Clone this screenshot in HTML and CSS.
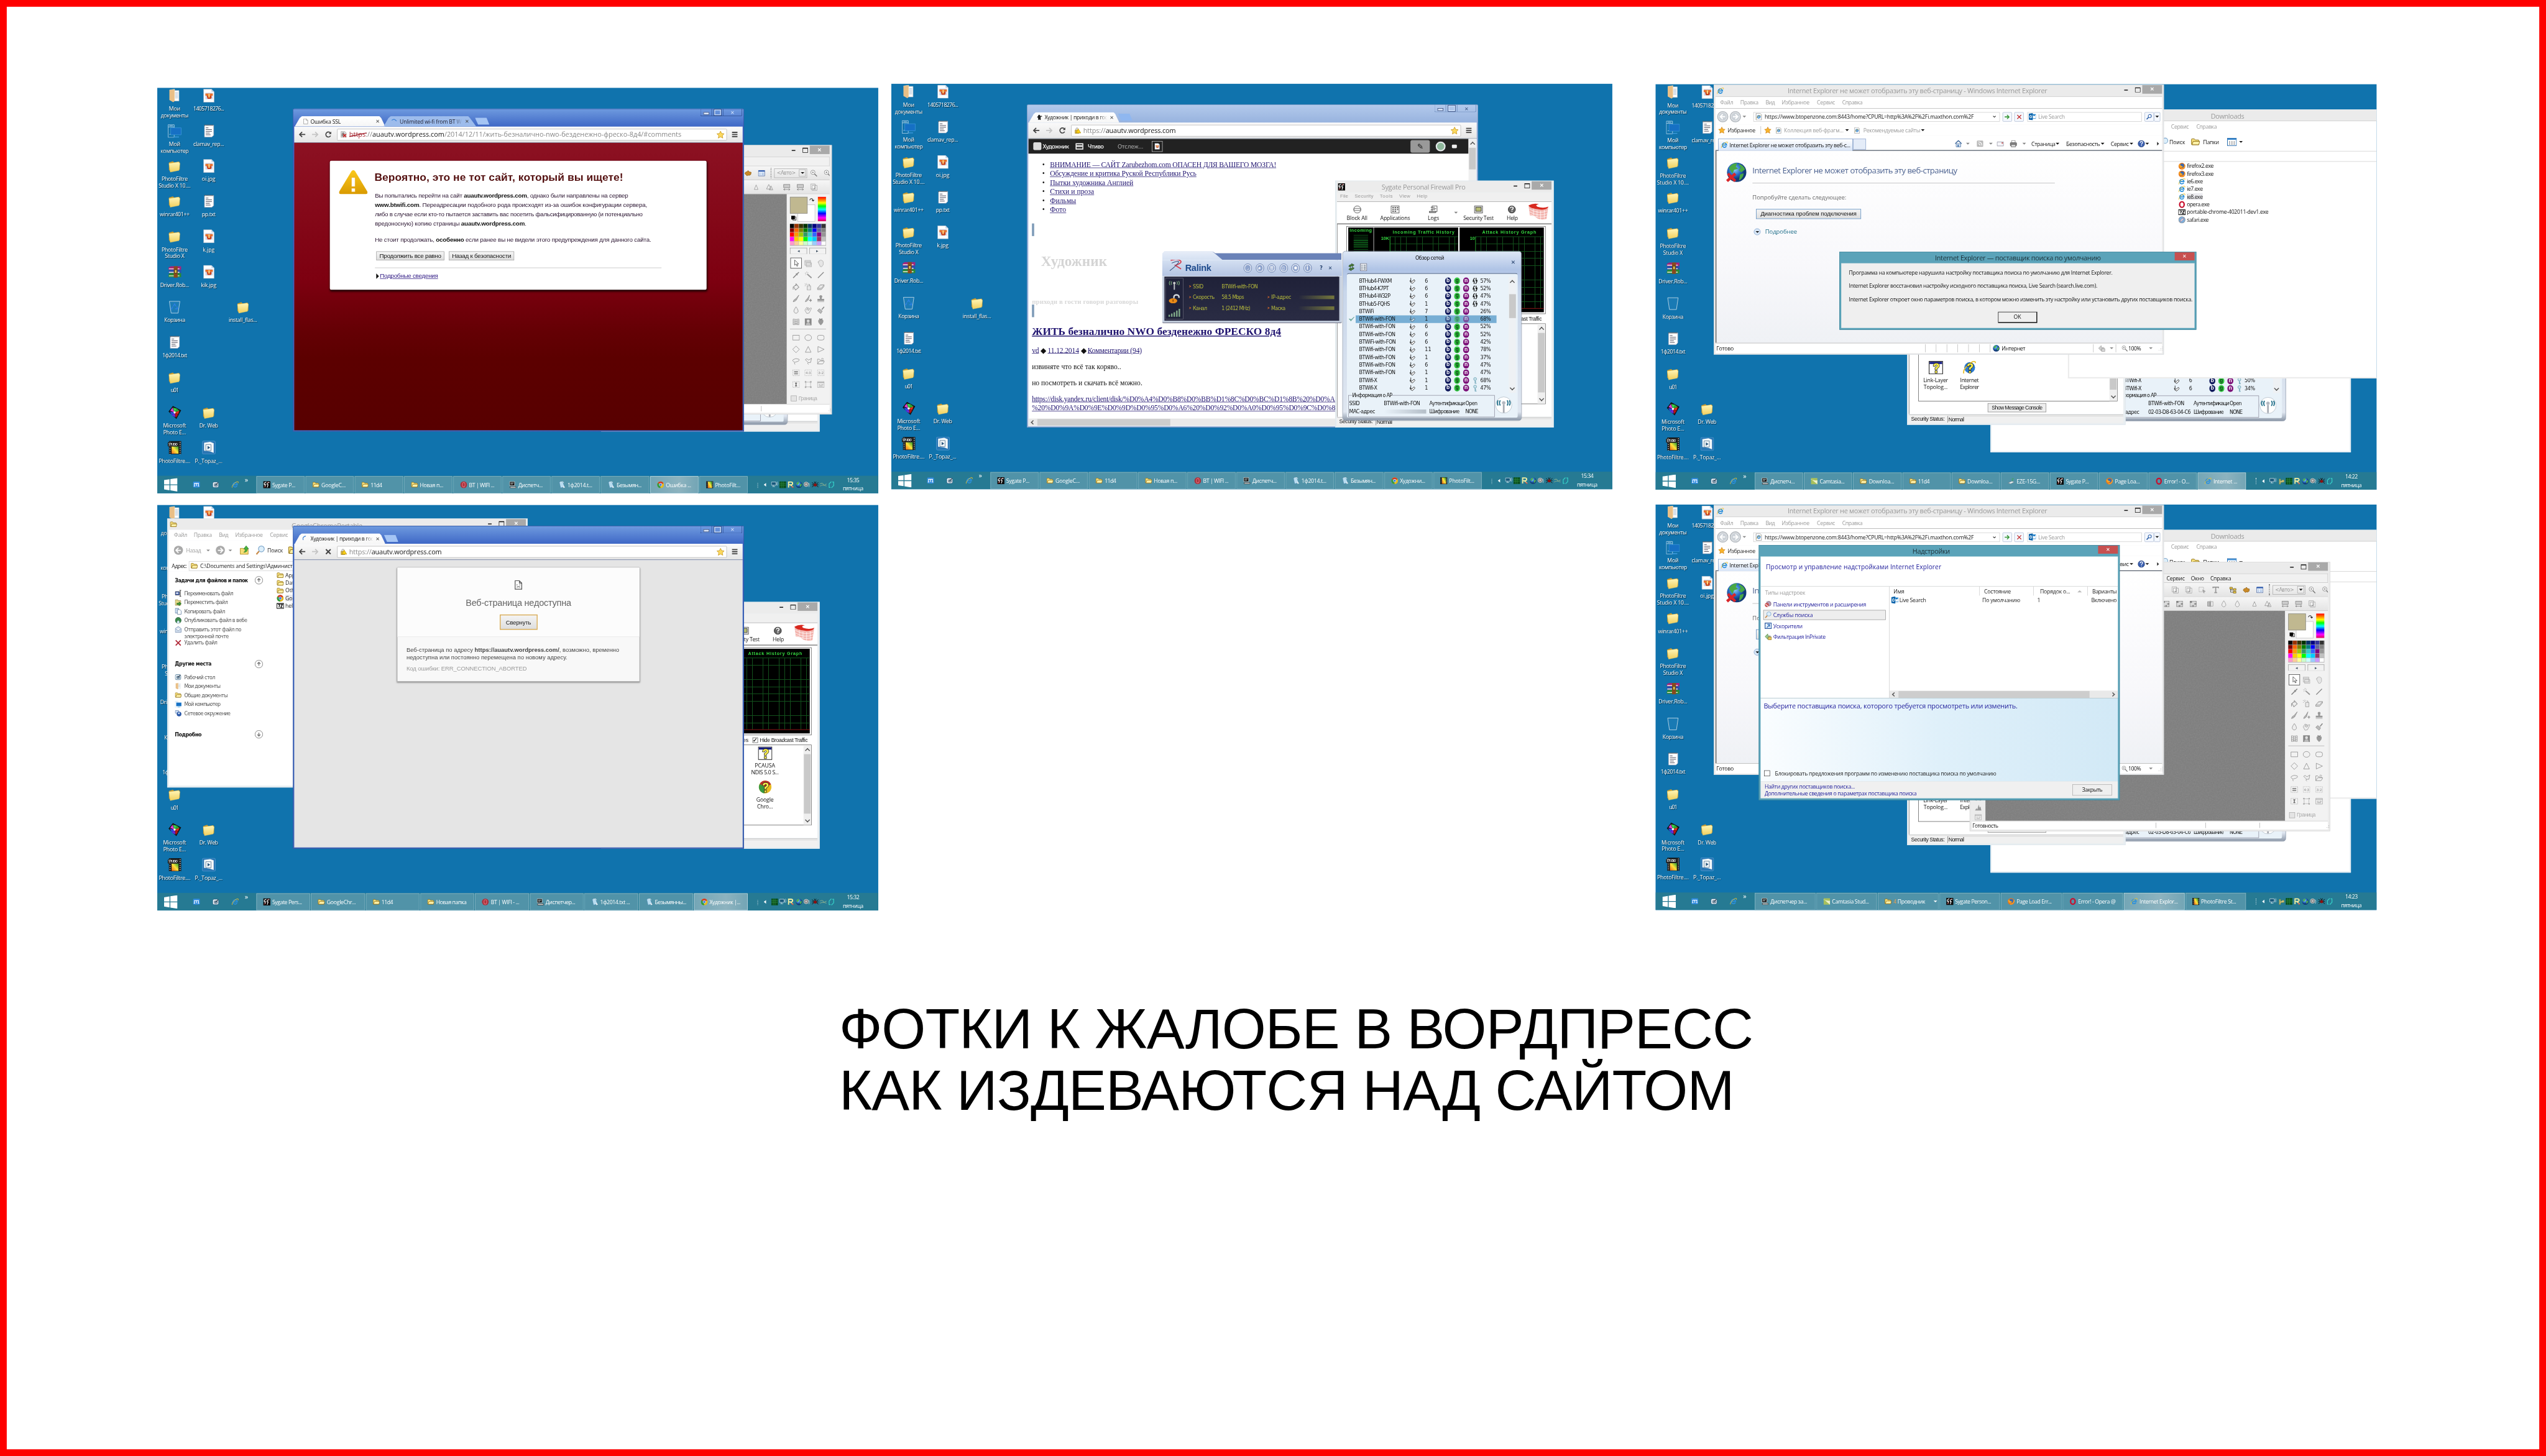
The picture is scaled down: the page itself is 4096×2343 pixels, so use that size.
FILE: index.html
```
<!DOCTYPE html>
<html lang="ru">
<head>
    <meta charset="UTF-8">
    <title>Фотки к жалобе</title>
    <link rel="stylesheet" href="styles.css">
</head>
<body>

<!-- icon sprite -->
<svg class="sprite" width="0" height="0">
    <defs>
        <linearGradient id="g-folder" x1="0" y1="0" x2="0" y2="1"><stop offset="0" stop-color="#fff6b8"/><stop offset="1" stop-color="#f0cf5c"/></linearGradient>
        <linearGradient id="g-warn" x1="0" y1="0" x2="0" y2="1"><stop offset="0" stop-color="#fbc91c"/><stop offset="1" stop-color="#d99a00"/></linearGradient>
        <linearGradient id="g-topaz" x1="0" y1="1" x2="1" y2="0"><stop offset="0" stop-color="#e8641b"/><stop offset=".5" stop-color="#ffe23a"/><stop offset="1" stop-color="#1c9c2c"/></linearGradient>
        <radialGradient id="g-globe" cx=".4" cy=".35"><stop offset="0" stop-color="#8fd0f5"/><stop offset=".6" stop-color="#2a6fc8"/><stop offset="1" stop-color="#123a78"/></radialGradient>
        <filter id="grain"><feTurbulence type="fractalNoise" baseFrequency=".35" numOctaves="2"/><feColorMatrix values="0 0 0 0 .5  0 0 0 0 .5  0 0 0 0 .5  .9 0 0 0 -.25"/></filter>
    </defs>
    <symbol id="docs" viewBox="0 0 32 32"><path d="M14 4h12v24H14z" fill="#fff" stroke="#b8c4cc"/><path d="M17 9h7M17 12h7M17 15h7M17 18h7M17 21h7" stroke="#8aa7c4"/><path d="M4 3l12-2v27l-3 3-9-5z" fill="#e9bf86"/><path d="M4 3l12-2v27" fill="none" stroke="#f5dcb4"/></symbol>
    <symbol id="pc" viewBox="0 0 32 32"><path d="M1 2h14v29H1zM1 7h14M4 4.500h8M4 24h6" fill="none" stroke="#b8d6ea" stroke-width="1.200"/><path d="M7 9h24v16H7z" fill="#1670c4" stroke="#3f9de0"/><path d="M14 30h12" stroke="#3f9de0" stroke-width="2"/></symbol>
    <symbol id="folder" viewBox="0 0 32 32"><path d="M3 8l9-3 3 3 11-2 2 2v16l-22 4-3-3z" fill="#c99a2c"/><path d="M3 10l22-3 3 3-2 16-20 4z" fill="url(#g-folder)" stroke="#e8cb62" stroke-width=".6"/></symbol>
    <symbol id="xpfolder" viewBox="0 0 16 16"><path d="M1 3.500q0-1 1-1h4l1.500 2H13q1 0 1 1V13H2q-1 0-1-1z" fill="#f7e07c" stroke="#8a6a12"/><path d="M2 13l2-6h11.500l-1.500 6z" fill="#fff2a8" stroke="#8a6a12"/></symbol>
    <symbol id="img" viewBox="0 0 32 32"><path d="M4 1h18l6 6v24H4z" fill="#fff" stroke="#9fb2c6"/><path d="M22 1v6h6z" fill="#bcd0e8"/><path d="M8 9h17v15H8z" fill="#cfd6ea"/><path d="M8 11h17v5H8z" fill="#e8702a"/><path d="M11 16h11v5l-2 2h-7z" fill="#c9421c"/><path d="M15 12h3v8h-3z" fill="#ffdc80"/></symbol>
    <symbol id="txt" viewBox="0 0 32 32"><path d="M6 3h21v23l-4 4H6z" fill="#fff" stroke="#aab"/><path d="M6 3h21" stroke="#555" stroke-width="3" stroke-dasharray="1.500 1.500"/><path d="M9 9h6M9 13h14M9 17h14M9 21h9M9 25h11" stroke="#445" stroke-width="1.300"/></symbol>
    <symbol id="rar" viewBox="0 0 32 32"><path d="M2 6l5-3h24v8H2z" fill="#a3267c"/><path d="M2 14l3-3h26v8H2z" fill="#2c4fae"/><path d="M2 22l3-3h26v9H2z" fill="#2a8a35"/><path d="M3 9h24M3 17h24M3 25h24" stroke="#efe8dc" stroke-width="2"/><path d="M14 3h9v26h-9z" fill="#8a4a1c"/><path d="M16 11h5v8h-5z" fill="#e8c84a" stroke="#222"/></symbol>
    <symbol id="bin" viewBox="0 0 32 32"><path d="M4 3h24l-4 27H8z" fill="#2c86c4" fill-opacity=".35" stroke="#c6dcea" stroke-width="1.200"/></symbol>
    <symbol id="binfull" viewBox="0 0 32 32"><path d="M4 3h24l-4 27H8z" fill="#2c86c4" fill-opacity=".4" stroke="#c6dcea" stroke-width="1.200"/><path d="M13 14l3-5 3 5M21 15l2 5h-6M11 20l-2 0 3-5" fill="none" stroke="#2a7fe0" stroke-width="2.400"/></symbol>
    <symbol id="mspe" viewBox="0 0 32 32"><path d="M2 14L12 1l19 10-11 20z" fill="#111"/><path d="M16 16L6 12l5-7z" fill="#e33ad0"/><path d="M16 16L12 5l9 2z" fill="#3bd24a"/><path d="M16 16l5-9 6 5z" fill="#2aa832"/><path d="M16 16l11-4-3 8z" fill="#e0301e"/><path d="M16 16l8 5-5 7z" fill="#b81313"/><path d="M16 16l2 11-8-4z" fill="#6a2ad8"/><path d="M16 16l-6 7-5-9z" fill="#2b48e0"/><circle cx="16" cy="16" r="2.500" fill="#fff"/></symbol>
    <symbol id="studio" viewBox="0 0 32 32"><path d="M3 1h28v30H3z" fill="#111"/><path d="M9 13h16v17H9z" fill="url(#g-topaz)"/><path d="M5.500 3v28M28.500 3v28" stroke="#ddd" stroke-width="2" stroke-dasharray="2 2.500"/><path d="M0 4h25v9H0z" fill="#000" stroke="#888" stroke-width=".6"/><text x="2" y="11" font-size="6.500" font-weight="bold" font-family="Liberation Sans, sans-serif" fill="#fff" textLength="21">STUDIO</text></symbol>
    <symbol id="ptopaz" viewBox="0 0 32 32"><rect x="1" y="1" width="30" height="30" rx="3" fill="#2a76b4" stroke="#5aa0d4"/><path d="M5 5l14-2 8 3v22l-8-3-14-2z" fill="#f4f8fa"/><path d="M9 9h12v14H9z" fill="none" stroke="#3a5f80"/><path d="M13 12l6 4-6 4z" fill="#2c5880"/></symbol>
    <symbol id="winlogo" viewBox="0 0 32 32"><path d="M0 5l13-2v12H0zM15 2.700L32 0v15H15zM0 17h13v12L0 27zM15 17h17v15l-17-2.700z" fill="#fff"/></symbol>
    <symbol id="maxthon" viewBox="0 0 16 16"><rect x=".5" y="1" width="15" height="13" rx="2" fill="#2f8be0"/><path d="M3.500 11V5h9v6M8 5v6M5 11h-3M14 11h-3" fill="none" stroke="#fff" stroke-width="1.500"/></symbol>
    <symbol id="desk" viewBox="0 0 16 16"><rect x="1" y="2" width="13" height="12" rx="3" fill="#e8f2f8" stroke="#27557a"/><path d="M5 6h6v5H5z" fill="#9fc2dc" stroke="#234"/><path d="M7 9l6-6" stroke="#234" stroke-width="1.500"/></symbol>
    <symbol id="ie" viewBox="0 0 16 16"><path d="M12 10.500A4.800 4.800 0 1 1 12.600 8H4" fill="none" stroke="#2b8fdc" stroke-width="2.400"/><path d="M1 14.500C-.5 11 8 1.500 13.500 1c2 0 1.500 2 .5 3.500" fill="none" stroke="#f0c42c" stroke-width="1.300"/></symbol>
    <symbol id="iedoc" viewBox="0 0 16 16"><path d="M2 .5h9l3 3v12H2z" fill="#fff" stroke="#888"/><path d="M11 9.500A3.200 3.200 0 1 1 11.300 8H5" fill="none" stroke="#2b7fcc" stroke-width="1.700"/><path d="M3 12c1-4 5-7 9-7" fill="none" stroke="#d8a820"/></symbol>
    <symbol id="sygate" viewBox="0 0 16 16"><path d="M0 0h16v16H0z" fill="#0a0a0a"/><path d="M7 2C3 3 1 6 3 8l2-1-1 6M14 3c-4 0-6 2-5 5l2 0-2 6" fill="none" stroke="#fff" stroke-width="1.500"/><path d="M2 14l4-4M9 4l3-3" stroke="#e02020"/></symbol>
    <symbol id="opera" viewBox="0 0 16 16"><ellipse cx="8" cy="8" rx="5" ry="6.200" fill="none" stroke="#c8102e" stroke-width="3.200"/></symbol>
    <symbol id="operam" viewBox="0 0 16 16"><circle cx="8" cy="8" r="7.500" fill="#a8323e"/><ellipse cx="8" cy="8" rx="3" ry="5" fill="none" stroke="#dc6c74" stroke-width="1.600"/></symbol>
    <symbol id="taskmgr" viewBox="0 0 16 16"><path d="M1 1h11v9H1z" fill="#111" stroke="#ddd"/><path d="M3 4h7M3 6.500h5" stroke="#fff"/><path d="M2 12h13v3H2z" fill="#e8e8e8" stroke="#222"/></symbol>
    <symbol id="notepad" viewBox="0 0 16 16"><path d="M2 2l8-1 4 12-9 2z" fill="#b8dcf0" stroke="#4888ac"/><path d="M4 2l6-1 2 3" fill="none" stroke="#fff"/><path d="M11 9l4 5-4 1z" fill="#e8eef2"/></symbol>
    <symbol id="chrome" viewBox="0 0 16 16"><circle cx="8" cy="8" r="7.500" fill="#e3b81c"/><path d="M8 8L1.500 4.200A7.500 7.500 0 0 1 14.500 4.500z" fill="#d23a2a"/><path d="M8 8L1.500 4.200A7.500 7.500 0 0 0 7.500 15.500z" fill="#2f9a42"/><circle cx="8" cy="8" r="3.400" fill="#fff"/><circle cx="8" cy="8" r="2.600" fill="#3c7de0"/></symbol>
    <symbol id="pf" viewBox="0 0 16 16"><path d="M0 0h16v16H0z" fill="#151515"/><path d="M4 1h9v14H4z" fill="url(#g-topaz)"/><path d="M2 1v14M14.500 1v14" stroke="#ccc" stroke-dasharray="1 1"/></symbol>
    <symbol id="firefox" viewBox="0 0 16 16"><circle cx="8" cy="8" r="7.500" fill="#e8761a"/><circle cx="8.500" cy="6.500" r="4.300" fill="#3468b4"/><path d="M1 5c2-1 4 0 5 2l4 1c-1 3-5 4-7 2z" fill="#f5a623"/><path d="M15 5c0 6-4 9-9 9" fill="none" stroke="#fbc84a" stroke-width="1.200"/></symbol>
    <symbol id="camtasia" viewBox="0 0 16 16"><path d="M1 1h14v14H1z" fill="#a8c05c"/><path d="M1 5c5-1 8 3 14 1v9L1 3z" fill="#eef2cc"/></symbol>
    <symbol id="eze" viewBox="0 0 16 16"><path d="M1 12l9-4 5 2-8 4z" fill="#e8eef2" stroke="#68808c"/><path d="M11 8V3M9 4l2-2 3 1" stroke="#38b048" fill="none"/></symbol>
    <symbol id="safari" viewBox="0 0 16 16"><circle cx="8" cy="8" r="7" fill="#7fb0dc" stroke="#8a98a8" stroke-width="1.500"/><path d="M12 4L7 7l-3 5 5-3z" fill="#fff" stroke="#c33" stroke-width=".5"/></symbol>
    <symbol id="sevenz" viewBox="0 0 16 16"><path d="M.5 2.500h15v11H.5z" fill="#fff" stroke="#000" stroke-width="1.500"/><path d="M3 5h4l-2 6M9 5h4l-4 6h4" fill="none" stroke="#000" stroke-width="1.600"/></symbol>
    <symbol id="page" viewBox="0 0 16 16"><path d="M3 1h7l4 4v10H3z" fill="#fff" stroke="#777"/><path d="M10 1v4h4" fill="none" stroke="#777"/></symbol>
    <symbol id="spin" viewBox="0 0 16 16"><path d="M2 12A7 7 0 0 1 9 1.500" fill="none" stroke="#3a7fd5" stroke-width="2"/></symbol>
    <symbol id="spintop" viewBox="0 0 16 16"><path d="M1 5Q8-1 14 7" fill="none" stroke="#3a7fd5" stroke-width="2"/></symbol>
    <symbol id="raven" viewBox="0 0 16 16"><path d="M5 1h4v3h5l1 2h-4v9H8l-1-3-1 3H4V9L1 8l3-4z" fill="#1a1a1a"/></symbol>
    <symbol id="lockbad" viewBox="0 0 16 16"><path d="M2 1h9l3 3v11H2z" fill="#ddd" stroke="#999"/><path d="M5 7V5q2-3 4 0v2M4 7h6v5H4z" fill="#999" stroke="#777"/><path d="M7 7l7 7M14 7l-7 7" stroke="#d02020" stroke-width="2.200"/></symbol>
    <symbol id="lockwarn" viewBox="0 0 16 16"><path d="M2 7h9v8H2z" fill="#d6b64a" stroke="#a08020"/><path d="M4 7V4q2.500-4 5 0v3" fill="none" stroke="#999" stroke-width="1.500"/><path d="M9 4l6.500 10h-11z" fill="#fcd116" stroke="#b08a00"/></symbol>
    <symbol id="back" viewBox="0 0 16 16"><path d="M8 2L2 8l6 6M2 8h14" fill="none" stroke="currentColor" stroke-width="2.600"/></symbol>
    <symbol id="fwd" viewBox="0 0 16 16"><path d="M8 2l6 6-6 6M14 8H0" fill="none" stroke="currentColor" stroke-width="2.600"/></symbol>
    <symbol id="reload" viewBox="0 0 16 16"><path d="M13 4.500A6 6 0 1 0 13.500 11" fill="none" stroke="#444" stroke-width="2.400"/><path d="M15 1v6H9z" fill="#444"/></symbol>
    <symbol id="stopx" viewBox="0 0 16 16"><path d="M2.500 2.500l11 11M13.500 2.500l-11 11" stroke="#444" stroke-width="3"/></symbol>
    <symbol id="star" viewBox="0 0 16 16"><path d="M8 1l2.200 4.600 5 .6-3.700 3.500 1 5L8 12.300l-4.500 2.400 1-5L.8 6.200l5-.6z" fill="#fbd95e" stroke="#c89820"/></symbol>
    <symbol id="favstar" viewBox="0 0 16 16"><path d="M8 1l2.200 4.600 5 .6-3.700 3.500 1 5L8 12.300l-4.500 2.400 1-5L.8 6.200l5-.6z" fill="#f8b42c" stroke="#d08010"/></symbol>
    <symbol id="warn" viewBox="0 0 64 54"><path d="M28 3q4-5 8 0l27 45q2 5-3 6H4q-5-1-3-6z" fill="url(#g-warn)"/><path d="M28 17h8v20h-8zM28 41h8v8h-8z" fill="#fff" stroke="#e8a820" stroke-width=".8"/></symbol>
    <symbol id="sad" viewBox="0 0 16 20"><path d="M1 1h9l5 5v13H1zM10 1v5h5" fill="none" stroke="#555" stroke-width="1.600"/><path d="M5 9v2M11 9v2M4.500 15q3.500-3 7 0" stroke="#555" stroke-width="1.500" fill="none"/></symbol>
    <symbol id="globex" viewBox="0 0 44 46"><circle cx="23" cy="23" r="21" fill="url(#g-globe)"/><path d="M6 14Q12 3 24 3l-3 8 5 4-9 3-3 8zM26 5q12 2 15 12l-8 6-6-5 5-5zM30 28l8-3q0 10-10 16z" fill="#49a845"/><path d="M4 26l16 16M20 26L2 42" stroke="#d8252a" stroke-width="6"/></symbol>
    <symbol id="globe" viewBox="0 0 16 16"><circle cx="8" cy="8" r="7.300" fill="url(#g-globe)"/><path d="M2 5q4-5 7-3l-2 4-3 3zM10 7l4-1q1 5-4 7z" fill="#4caf50"/></symbol>
    <symbol id="arrowc" viewBox="0 0 24 24"><circle cx="12" cy="12" r="10.500" fill="#f0f0f0" stroke="#b4bac0" stroke-width="2"/><circle cx="12" cy="12" r="8.500" fill="#ccd2d8"/><path d="M12 7l-5 5 5 5M7 12h10" fill="none" stroke="#fff" stroke-width="2.400"/></symbol>
    <symbol id="grayarrow" viewBox="0 0 24 24"><circle cx="12" cy="12" r="11" fill="#aaa"/><path d="M12 6l-6 6 6 6M6 12h12" fill="none" stroke="#fff" stroke-width="2.600"/></symbol>
    <symbol id="upc" viewBox="0 0 20 20"><circle cx="10" cy="10" r="9" fill="none" stroke="#888" stroke-width="1.400"/><path d="M6.500 9.500L10 6l3.500 3.500M10 6v8" fill="none" stroke="#777" stroke-width="2"/></symbol>
    <symbol id="upfolder" viewBox="0 0 20 20"><path d="M1 6h6l2 2h8v10H1z" fill="#f5dd74" stroke="#a88420"/><path d="M8 14q4-2 3-7H8l5-6 5 6h-3q1 7-7 7z" fill="#48b43c" stroke="#207020" stroke-width=".8"/></symbol>
    <symbol id="glass" viewBox="0 0 22 22"><path d="M8 13l-6 7" stroke="#c88a48" stroke-width="3"/><circle cx="13" cy="8" r="6.500" fill="#dceefa" stroke="#7fa8cc" stroke-width="1.600"/></symbol>
    <symbol id="lens" viewBox="0 0 16 16"><path d="M7 9l-5 5" stroke="#2c5fa8" stroke-width="2.500"/><circle cx="10" cy="6" r="4" fill="#fff" stroke="#2c5fa8" stroke-width="1.600"/></symbol>
    <symbol id="zoomin" viewBox="0 0 16 16"><path d="M9 9l6 6" stroke="#777" stroke-width="2"/><circle cx="6" cy="6" r="4.700" fill="#fff" stroke="#888" stroke-width="1.200"/><path d="M6 4v4M4 6h4" stroke="#666"/></symbol>
    <symbol id="outlook" viewBox="0 0 16 16"><path d="M8 3h8v9H8z" fill="#fff" stroke="#0a74c4"/><path d="M8 3l4 4 4-4z" fill="#0a74c4"/><path d="M0 1.500L9 0v16l-9-1.500z" fill="#0a64ac"/><ellipse cx="4.500" cy="8" rx="2" ry="2.800" fill="none" stroke="#fff" stroke-width="1.400"/></symbol>
    <symbol id="go" viewBox="0 0 16 16"><path d="M2 8h10M8 3l5 5-5 5" fill="none" stroke="#3a9a3a" stroke-width="2.400"/></symbol>
    <symbol id="redx" viewBox="0 0 16 16"><path d="M3 3l10 10M13 3L3 13" stroke="#c43030" stroke-width="2"/></symbol>
    <symbol id="home" viewBox="0 0 16 16"><path d="M1 8l7-7 7 7" fill="none" stroke="#3a6498" stroke-width="2"/><path d="M3 8h10v7H3z" fill="#dce8f4" stroke="#3a6498"/><path d="M6 10h3v5H6z" fill="#4878b0"/></symbol>
    <symbol id="rss" viewBox="0 0 16 16"><rect x="1" y="1" width="14" height="14" rx="2" fill="#b8b8b8"/><path d="M4 4q8 0 8 8M4 8q4 0 4 4" stroke="#fff" fill="none" stroke-width="1.700"/></symbol>
    <symbol id="mail" viewBox="0 0 16 16"><path d="M1 4h14v9H1z" fill="#f6f6fa" stroke="#889"/><path d="M11 5h3v3h-3z" fill="#c86060"/></symbol>
    <symbol id="print" viewBox="0 0 16 16"><path d="M4 1h8v5H4z" fill="#fff" stroke="#666"/><path d="M1 6h14v6H1z" fill="#888" stroke="#444"/><path d="M3 10h10v5H3z" fill="#ddd" stroke="#555"/></symbol>
    <symbol id="help" viewBox="0 0 16 16"><circle cx="8" cy="8" r="7.300" fill="#3a5fb0" stroke="#20386c"/><path d="M5.500 6q0-3 2.700-3t2.500 2.300Q10.600 7 8.300 9v1M8.300 11.500v1.800" fill="none" stroke="#fff" stroke-width="1.700"/></symbol>
    <symbol id="qwin" viewBox="0 0 32 30"><path d="M1 1h30v28H1z" fill="#fff" stroke="#222" stroke-width="1.500"/><path d="M2 2h28v5H2z" fill="#141c80"/><path d="M10 12q0-7 7-7t7 6q0 4-5 6v3h-5v-5q5-2 5-4t-2-2-2 3zM14 22h5v5h-5z" fill="#fdf24a" stroke="#111"/></symbol>
    <symbol id="qie" viewBox="0 0 32 30"><circle cx="16" cy="15" r="12" fill="#2b7bd0"/><path d="M3 28Q0 20 14 8T29 5" fill="none" stroke="#e8c030" stroke-width="2.500"/><path d="M10 12q0-7 7-7t7 6q0 4-5 6v3h-5v-5q5-2 5-4t-2-2-2 3zM14 22h5v5h-5z" fill="#fdf24a" stroke="#111"/></symbol>
    <symbol id="qchrome" viewBox="0 0 32 30"><circle cx="16" cy="15" r="14" fill="#e8bc20"/><path d="M16 15L4 8a14 14 0 0 1 25 1z" fill="#b83028"/><path d="M16 15L4 8a14 14 0 0 0 10 21z" fill="#3a9a40"/><path d="M10 12q0-7 7-7t7 6q0 4-5 6v3h-5v-5q5-2 5-4t-2-2-2 3zM14 22h5v5h-5z" fill="#fdf24a" stroke="#111"/></symbol>
    <symbol id="wall" viewBox="0 0 46 38"><path d="M1 5q22 16 44 2l-4 28q-18 4-26-6L4 27z" fill="#f3b4ae"/><path d="M3 13q20 12 40 4M3 19q20 12 40 4M5 25q18 10 37 4M12 12v15M20 16v16M28 17v19M36 15v19" stroke="#fff" fill="none"/><path d="M1 5Q12-1 24 2q-10 2-3 6 12 4 24 0-4 8-20 6Q4 12 1 5z" fill="#d8281e"/></symbol>
    <symbol id="sg-block" viewBox="0 0 20 18"><circle cx="10" cy="9" r="8" fill="#f2f2f2" stroke="#333"/><path d="M3 7h14v4H3z" fill="#fff" stroke="#555"/></symbol>
    <symbol id="sg-app" viewBox="0 0 20 18"><path d="M1 1h18v16H1z" fill="#eee" stroke="#222"/><path d="M4 5h3M9 5h3M14 5h3M4 9h3M9 9h3M14 9h3M4 13h3M9 13h3" stroke="#333" stroke-width="2"/></symbol>
    <symbol id="sg-log" viewBox="0 0 20 18"><path d="M7 1h11v13H7z" fill="#fff" stroke="#222"/><path d="M4 4h9M9 7h7M4 9h10M1 13h14v3H1z" stroke="#222" fill="#bbb"/></symbol>
    <symbol id="sg-test" viewBox="0 0 20 18"><path d="M1 1h18v16H1z" fill="#ddd" stroke="#222"/><path d="M4 4h12v9H4z" fill="#b6bc74" stroke="#222"/></symbol>
    <symbol id="sg-help" viewBox="0 0 20 18"><circle cx="9" cy="9" r="8" fill="#666" stroke="#111"/><path d="M6 6q0-2.500 3-2.500T12 6q0 2-2.700 3v2M9.300 12.500v2" stroke="#fff" stroke-width="2" fill="none"/></symbol>
    <symbol id="hand" viewBox="0 0 14 16"><path d="M3 1v9M1 7l4 3 6-5 2 3-6 6-5-3z" fill="#fff" stroke="#222" stroke-width="1.300"/></symbol>
    <symbol id="wps" viewBox="0 0 12 14"><path d="M5 1Q2 4 2 8l2-1v6M7 13q3-3 3-7L8 7V1" fill="none" stroke="#111" stroke-width="1.700"/></symbol>
    <symbol id="key" viewBox="0 0 12 14"><circle cx="6" cy="4" r="3" fill="#cfe6ee" stroke="#5a98ac"/><path d="M6 7v6h3M6 10h2" fill="none" stroke="#5a98ac" stroke-width="1.300"/></symbol>
    <symbol id="antenna" viewBox="0 0 40 40"><circle cx="20" cy="20" r="19" fill="#fff" stroke="#a8b4c0"/><path d="M18 19h4v19h-4z" fill="#a8acb4"/><circle cx="20" cy="15" r="4" fill="#b4b8c0"/><path d="M12 9q-4 6 0 12M7 9q-4 6 0 12M28 9q4 6 0 12M33 9q4 6 0 12" fill="none" stroke="#1c6c88" stroke-width="2.600"/></symbol>
    <symbol id="tick" viewBox="0 0 16 14"><path d="M1 6l5 6 9-11-8 7z" fill="#7fb8a8" stroke="#4c8c80"/></symbol>
    <symbol id="refresh" viewBox="0 0 16 18"><path d="M2 7q1-4 7-4l-1-2 6 3-4 4v-2q-4 0-4 3zM14 11q-1 4-7 4l1 2-6-3 4-4v2q4 0 4-3z" fill="#4a7c38" stroke="#1c3c14" stroke-width=".8"/></symbol>
    <symbol id="listic" viewBox="0 0 16 18"><path d="M1 1h14v16H1z" fill="#f6f8fc" stroke="#556"/><path d="M3 5h3M8 5h5M3 9h3M8 9h5M3 13h3M8 13h5" stroke="#456" stroke-width="1.600"/></symbol>
    <symbol id="ralink" viewBox="0 0 34 30"><path d="M6 4Q20-1 28 5q4 5-12 10l13 8" fill="none" stroke="#d83a4a" stroke-width="2.200"/><path d="M8 10q14-6 16-3-2 6-20 20l10-8" fill="none" stroke="#35507c" stroke-width="1.400"/></symbol>
    <symbol id="rl-ant" viewBox="0 0 30 24"><path d="M15 9v14" stroke="#b8bcc0" stroke-width="3"/><circle cx="15" cy="7" r="3" fill="#ccc"/><path d="M9 3q-3 4 0 8M5 2q-4 5 0 10M21 3q3 4 0 8M25 2q4 5 0 10" fill="none" stroke="#78a478" stroke-width="1.800"/></symbol>
    <symbol id="rl-lock" viewBox="0 0 30 24"><path d="M14 11q-1-8 6-8t6 7" fill="none" stroke="#d8dce0" stroke-width="3.500"/><ellipse cx="12" cy="17" rx="10" ry="6" fill="#e88a18"/><path d="M12 14v5" stroke="#7a3c00" stroke-width="2"/></symbol>
    <symbol id="rl-bars" viewBox="0 0 30 24"><path d="M3 18v5M9 15v8M15 12v11M21 8v15M27 4v19" stroke="#7fa888" stroke-width="3.600"/></symbol>
    <symbol id="cur" viewBox="0 0 16 16"><path d="M5 1v12l3-3 2 5 2-1-2-4h4z" fill="#fff" stroke="#333"/></symbol>
    <symbol id="t-win" viewBox="0 0 16 16"><path d="M1 2h12v10H1zM1 5h12M4 7h11v8H4z" fill="#e4e4e4" stroke="#aaa"/></symbol>
    <symbol id="t-hand" viewBox="0 0 16 16"><path d="M4 9L2 5l2 0V3l2-1 2-1 2 1 2 1 1 2v6l-3 4H7z" fill="#e6e6e6" stroke="#aaa"/></symbol>
    <symbol id="t-pick" viewBox="0 0 16 16"><path d="M2 14l7-7M8 5l3 3M10 6l4-4" stroke="#888" stroke-width="2"/></symbol>
    <symbol id="t-wand" viewBox="0 0 16 16"><path d="M6 6l9 8" stroke="#999" stroke-width="2.500"/><path d="M1 4h3M5 0v3M2 8l2-2M8 2L7 4" stroke="#aaa"/></symbol>
    <symbol id="t-line" viewBox="0 0 16 16"><path d="M2 14L14 2" stroke="#888" stroke-width="1.600"/></symbol>
    <symbol id="t-fill" viewBox="0 0 16 16"><path d="M3 8l6-5 5 6-7 6zM2 8v6M8 6V1" fill="#eee" stroke="#999" stroke-width="1.400"/></symbol>
    <symbol id="t-spray" viewBox="0 0 16 16"><path d="M6 6h7v9H6zM8 3h3v3" fill="#e8e8e8" stroke="#999"/><path d="M1 2h1M3 4h1M1 6h1M4 1h1M5 3h1" stroke="#999" stroke-width="1.500"/></symbol>
    <symbol id="t-erase" viewBox="0 0 16 16"><path d="M1 11l6-7h8l-6 7zM1 11v3h8l6-7V4" fill="#ddd" stroke="#888"/></symbol>
    <symbol id="t-brush" viewBox="0 0 16 16"><path d="M14 1L7 9l2 2zM7 9q-4 1-5 6 5-1 7-4" fill="#bbb" stroke="#888"/></symbol>
    <symbol id="t-brushp" viewBox="0 0 16 16"><path d="M11 1L6 9l2 2zM6 9q-3 1-4 6 4-1 6-4" fill="#bbb" stroke="#888"/><path d="M13 9v6M10 12h6" stroke="#888" stroke-width="1.500"/></symbol>
    <symbol id="t-stamp" viewBox="0 0 16 16"><circle cx="8" cy="4" r="3" fill="#999"/><path d="M6 6h4v3h5v4H1V9h5z" fill="#999"/><path d="M1 15h14" stroke="#999"/></symbol>
    <symbol id="t-drop" viewBox="0 0 16 16"><path d="M8 1q6 8 4 11-4 5-8 0Q2 9 8 1z" fill="#eee" stroke="#999" stroke-width="1.200"/></symbol>
    <symbol id="t-finger" viewBox="0 0 16 16"><path d="M1 8l4-6 2 1-2 5 3-5 2 1-2 5 5-6 2 1-5 10-5 1z" fill="#eee" stroke="#999"/></symbol>
    <symbol id="t-broom" viewBox="0 0 16 16"><path d="M15 1l-5 6" stroke="#888" stroke-width="2"/><path d="M5 5l6 5-3 5-7-6z" fill="#bbb" stroke="#888"/></symbol>
    <symbol id="t-mesh" viewBox="0 0 16 16"><path d="M2 2q6 2 12 0v12q-6-2-12 0zM6 3v11M10 3v11M2 6q6 2 12 0M2 10q6 2 12 0" fill="none" stroke="#888"/></symbol>
    <symbol id="t-mona" viewBox="0 0 16 16"><path d="M1 1h14v14H1z" fill="#888"/><circle cx="8" cy="6" r="3" fill="#ddd"/><path d="M3 15q1-6 5-6t5 6z" fill="#bbb"/></symbol>
    <symbol id="t-berry" viewBox="0 0 16 16"><path d="M3 4q5-3 10 0 2 5-5 11Q1 9 3 4z" fill="#999"/><path d="M5 1l3 3 3-3" stroke="#888" stroke-width="2" fill="none"/></symbol>
    <symbol id="s-rect" viewBox="0 0 16 16"><path d="M1 3h14v10H1z" fill="none" stroke="#888"/></symbol>
    <symbol id="s-oval" viewBox="0 0 16 16"><ellipse cx="8" cy="8" rx="7" ry="6" fill="none" stroke="#888"/></symbol>
    <symbol id="s-round" viewBox="0 0 16 16"><rect x="1" y="3" width="14" height="10" rx="4" fill="none" stroke="#888"/></symbol>
    <symbol id="s-dia" viewBox="0 0 16 16"><path d="M8 1l7 7-7 7-7-7z" fill="none" stroke="#888"/></symbol>
    <symbol id="s-tri" viewBox="0 0 16 16"><path d="M8 2l6 12H2z" fill="none" stroke="#888"/></symbol>
    <symbol id="s-rtri" viewBox="0 0 16 16"><path d="M2 2l13 6-13 6z" fill="none" stroke="#888"/></symbol>
    <symbol id="s-lasso" viewBox="0 0 16 16"><path d="M5 10Q-1 8 2 5q5-4 12-1 3 4-7 6-4 1-1 5" fill="none" stroke="#888"/></symbol>
    <symbol id="s-poly" viewBox="0 0 16 16"><path d="M8 11L2 5l3-2 4 3 6-4-2 9-5 0q-3 2 1 4" fill="none" stroke="#888"/></symbol>
    <symbol id="s-open" viewBox="0 0 16 16"><path d="M1 14V4h4l2 2h6v2M1 14l4-6h11l-4 6zM9 3q3-2 5 1" fill="none" stroke="#888"/></symbol>
    <symbol id="s-eq" viewBox="0 0 16 16"><path d="M1 2h14v12H1z" fill="none" stroke="#999" stroke-dasharray="1 1"/><path d="M4 6h8M4 10h8" stroke="#777" stroke-width="2"/></symbol>
    <symbol id="s-43" viewBox="0 0 16 16"><path d="M1 2h14v12H1z" fill="none" stroke="#aaa" stroke-dasharray="1 1"/><text x="2.500" y="11" font-size="8" font-family="Liberation Sans, sans-serif" fill="#888">4:3</text></symbol>
    <symbol id="s-32" viewBox="0 0 16 16"><path d="M1 2h14v12H1z" fill="none" stroke="#aaa" stroke-dasharray="1 1"/><text x="2.500" y="11" font-size="8" font-family="Liberation Sans, sans-serif" fill="#888">3:2</text></symbol>
    <symbol id="s-i" viewBox="0 0 16 16"><path d="M1 2h14v12H1z" fill="none" stroke="#999" stroke-dasharray="1 1"/><path d="M6 5h4M6 11h4M8 5v6" stroke="#666" stroke-width="1.800"/></symbol>
    <symbol id="s-tf" viewBox="0 0 16 16"><path d="M3 3h10v10H3z" fill="none" stroke="#999" stroke-dasharray="2 1"/><path d="M1 1h3v3H1zM12 1h3v3h-3zM1 12h3v3H1zM12 12h3v3h-3z" fill="#aaa"/></symbol>
    <symbol id="s-cfg" viewBox="0 0 16 16"><path d="M1 2h14v12H1z" fill="#eee" stroke="#aaa"/><path d="M1 4h14M4 8h3M9 8h4M4 11h8" stroke="#aaa" stroke-width="1.500"/></symbol>
    <symbol id="p-run" viewBox="0 0 16 16"><path d="M1 1h10v11H1zM4 4h11v11H4z" fill="#f4f4f4" stroke="#999"/><path d="M9 6l2 3-3 2 4 2M9 11l-2 3" stroke="#888" fill="none"/></symbol>
    <symbol id="p-sel" viewBox="0 0 16 16"><path d="M1 2h10v10H1z" fill="none" stroke="#999" stroke-dasharray="2 1"/><path d="M9 8l6 3-3 1v3z" fill="#bbb" stroke="#888"/></symbol>
    <symbol id="p-text" viewBox="0 0 16 16"><path d="M2 4V2h12v2M8 2v12M5 14h6" stroke="#999" stroke-width="2.400" fill="none"/></symbol>
    <symbol id="p-tree" viewBox="0 0 16 16"><path d="M1 2h6v4H1zM9 5h6v4H9zM9 11h6v4H9z" fill="#f0cc48" stroke="#665014"/><path d="M3 6v7h6M3 8h6" fill="none" stroke="#333"/></symbol>
    <symbol id="p-gear" viewBox="0 0 16 16"><path d="M1 9q1-5 5-4l2-3 3 3 4 1-1 5-4 2-2-1-2 2z" fill="#c98a28" stroke="#8a5a10"/></symbol>
    <symbol id="p-opt" viewBox="0 0 16 16"><path d="M1 2h14v12H1z" fill="#eef4fc" stroke="#3a5a98"/><path d="M1 3h14" stroke="#2f5cb0" stroke-width="3"/><path d="M3 8h3M8 8h5M3 11h3M8 11h5" stroke="#58c"/></symbol>
    <symbol id="p-grid" viewBox="0 0 16 16"><path d="M1 2h14v12H1z" fill="#ccc" stroke="#888"/><path d="M1 2h5v4H1zM10 6h5v4h-5zM5 10h5v4H5z" fill="#777"/><path d="M6 2v12M10 2v12M1 6h14M1 10h14" stroke="#eee"/></symbol>
    <symbol id="p-half" viewBox="0 0 16 16"><path d="M2 3h5v10H2z" fill="#bbb" stroke="#888"/><path d="M9 3h5v10H9z" fill="#eee" stroke="#999"/><path d="M8 1v14" stroke="#777"/></symbol>
    <symbol id="p-tri" viewBox="0 0 16 16"><path d="M8 3l4 10H4z" fill="#f4f4f4" stroke="#888"/></symbol>
    <symbol id="p-tri2" viewBox="0 0 16 16"><path d="M6 2l5 10H1zM11 5l4 9H7z" fill="#eee" stroke="#888"/></symbol>
    <symbol id="p-bar" viewBox="0 0 16 16"><path d="M1 2h14v7H1z" fill="#ccc" stroke="#777"/><path d="M1 13h14M4 11l-3 2 3 2M12 11l3 2-3 2" fill="none" stroke="#777"/></symbol>
    <symbol id="hist" viewBox="0 0 16 16"><path d="M1 15l3-5 2 3 3-11 2 7 2-3 2 9z" fill="#999"/></symbol>
    <symbol id="i-ren" viewBox="0 0 16 16"><path d="M1 4h10v8H1z" fill="#4868b0" stroke="#223"/><path d="M3 6h5v3H3z" fill="#fff"/><path d="M11 1h4M13 1v14M11 15h4" stroke="#333" stroke-width="1.400"/></symbol>
    <symbol id="i-move" viewBox="0 0 16 16"><path d="M1 2h6l1 2h6v11H1z" fill="#e4d888" stroke="#887840"/><path d="M5 10h5V7l5 4-5 5v-3H5z" fill="#3f9c3c" stroke="#186018"/></symbol>
    <symbol id="i-copy" viewBox="0 0 16 16"><path d="M1 1h8v11H1z" fill="#cfe0f2" stroke="#4c6c94"/><path d="M6 4h6l3 3v8H6z" fill="#fff" stroke="#4c6c94"/></symbol>
    <symbol id="i-web" viewBox="0 0 16 16"><circle cx="8" cy="8" r="7" fill="#3c8a4c" stroke="#24543c"/><path d="M5 11l3-3 3 3v4H5z" fill="#d4e4f4"/></symbol>
    <symbol id="i-mail" viewBox="0 0 16 16"><path d="M1 6l7-5 7 5v9H1z" fill="#cfdcec" stroke="#6c84a8"/><path d="M1 6l7 5 7-5" fill="#fff" stroke="#6c84a8"/></symbol>
    <symbol id="i-del" viewBox="0 0 16 16"><path d="M2 2l12 12M14 2L2 14" stroke="#b02838" stroke-width="2.600"/></symbol>
    <symbol id="i-net" viewBox="0 0 16 16"><path d="M1 2h8v6H1z" fill="#cfe0f6" stroke="#5878a8"/><circle cx="10" cy="10" r="5.500" fill="#2a58a8"/><path d="M7 8q3-3 5-1l-2 4z" fill="#e8f2fa"/></symbol>
    <symbol id="i-gear" viewBox="0 0 16 16"><circle cx="9" cy="7" r="5" fill="#b8a0b8" stroke="#887088" stroke-width="2" stroke-dasharray="2 1"/><circle cx="5" cy="10" r="4.500" fill="#c85050"/><path d="M2 8l6 5" stroke="#fff" stroke-width="1.500"/></symbol>
    <symbol id="i-acc" viewBox="0 0 16 16"><path d="M1 2h14v12H1z" fill="#e8f2fc" stroke="#2858a0" stroke-width="1.600"/><path d="M5 12l5-5M6 5h5v5" fill="none" stroke="#2868b8" stroke-width="1.800"/></symbol>
    <symbol id="i-priv" viewBox="0 0 16 16"><path d="M1 8l6-6v4q6 0 6 5l-6-1v4z" fill="#9cc88c" stroke="#588848"/><path d="M8 9h7v6H8z" fill="#e8c860" stroke="#907020"/><path d="M9.500 9V7q2-2 4 0v2" fill="none" stroke="#888"/></symbol>
    <symbol id="viewic" viewBox="0 0 22 18"><path d="M1 1h20v16H1z" fill="#fff" stroke="#2c70b0" stroke-width="1.400"/><path d="M1 3h20" stroke="#3c8ad0" stroke-width="3"/><path d="M5 8h2M10 8h2M15 8h2M5 11h2M10 11h2M15 11h2M5 14h2M10 14h2M15 14h2" stroke="#777" stroke-width="2"/></symbol>
    <symbol id="y-net" viewBox="0 0 16 16"><path d="M1 2h10v7H1z" fill="#16587c" stroke="#dce8f0"/><path d="M3 12h6M5 9v3" stroke="#dce8f0"/><path d="M12 3q2 3 0 6M14 1q3 5 0 9" fill="none" stroke="#bcd4e0"/></symbol>
    <symbol id="y-grid" viewBox="0 0 16 16"><path d="M1 1h14v14H1z" fill="#0c4c1c" stroke="#052"/><path d="M5 1v14M9 1v14M1 5h14M1 9h14" stroke="#2c9040"/></symbol>
    <symbol id="y-r" viewBox="0 0 16 16"><path d="M3 14V2h5q4 0 4 3t-4 3H3M7 8l6 6" fill="none" stroke="#f4f0a0" stroke-width="2.500"/><path d="M9 11l5 4" stroke="#c33" stroke-width="1.500"/></symbol>
    <symbol id="y-snd" viewBox="0 0 16 16"><circle cx="6" cy="7" r="5" fill="#888" stroke="#ddd"/><circle cx="6" cy="7" r="2" fill="#ccc"/><path d="M12 4q3 4 0 9" fill="none" stroke="#ddd"/></symbol>
    <symbol id="y-spider" viewBox="0 0 16 16"><path d="M1 3l5 4M1 8h5M1 13l5-4M15 3l-5 4M15 8h-5M15 13l-5-4M6 1l2 5 2-5" stroke="#111" stroke-width="1.300" fill="none"/><circle cx="8" cy="8.500" r="3.400" fill="#8c1010"/></symbol>
    <symbol id="y-dash" viewBox="0 0 16 16"><path d="M1 6q6-3 7 1t7-1M1 11q5-4 14 0" fill="none" stroke="#7ca890" stroke-width="1.600"/></symbol>
    <symbol id="y-swap" viewBox="0 0 16 16"><path d="M8 1L3 6v8h3M8 15l5-5V2h-3" fill="none" stroke="#35d0c8" stroke-width="1.700"/></symbol>
    <symbol id="y-user" viewBox="0 0 16 16"><path d="M4 3h3v5l5-3 3 1v4l-8 1v4H4z" fill="#d4c078" stroke="#684"/></symbol>
    <symbol id="menu3" viewBox="0 0 14 14"><path d="M0 2h14M0 7h14M0 12h14" stroke="#444" stroke-width="2.800"/></symbol>
</svg>

<!-- PhotoFiltre Studio -->
<template id="tpl-pf">
    <div class="title-row"><span class="wb"></span></div>
    <div class="pf-menu"><span data-w="40">Сервис</span><span data-w="29">Окно</span><span data-w="46">Справка</span></div>
    <div class="pf-bar pf-bar1" data-icons="p-run p-run p-sel p-text | p-tree p-gear p-opt"><span class="dots"></span><span class="combo"><b data-w="41">&lt;Авто&gt;</b><i><u class="dn"></u></i></span></div>
    <div class="pf-bar pf-bar2" data-icons="p-grid p-grid p-grid | p-half t-drop t-drop | p-tri p-tri2 | p-bar p-bar p-run"></div>
    <div class="pf-body">
        <div class="pf-left"><svg><use href="#p-bar"/></svg><svg><use href="#hist"/></svg><svg><use href="#s-cfg"/></svg></div>
        <div class="pf-canvas"><svg><rect width="100%" height="100%" filter="url(#grain)"/></svg></div>
        <div class="pf-panel">
            <div class="pf-colors">
                <div class="swatches"><i class="sw-bg"></i><i class="sw-fg"></i><i class="sw-mini"></i><em class="sw-swap">&#8631;</em></div>
                <div class="rainbow"></div>
            </div>
            <div class="palette"></div>
            <div class="pf-scroll"><i>&#9666;</i><i>&#9656;</i></div>
            <div class="pf-tools" data-icons="cur t-win t-hand t-pick t-wand t-line t-fill t-spray t-erase t-brush t-brushp t-stamp t-drop t-finger t-broom t-mesh t-mona t-berry"></div>
            <div class="pf-shapes" data-icons="s-rect s-oval s-round s-dia s-tri s-rtri s-lasso s-poly s-open s-eq s-43 s-32 s-i s-tf s-cfg"></div>
            <div class="pf-edge"><i></i><span data-w="41">Граница</span></div>
        </div>
    </div>
    <div class="pf-status"><span data-w="57">Готовность</span><i></i><i></i><i></i><em class="grip"></em></div>
</template>

<!-- Sygate Personal Firewall -->
<template id="tpl-sygate">
    <div class="title-row"><svg class="ico16"><use href="#sygate"/></svg><span class="sg-title" data-w="186">Sygate Personal Firewall Pro</span><span class="wb"></span></div>
    <div class="sg-menu"><span data-w="18">File</span><span data-w="42">Security</span><span data-w="29">Tools</span><span data-w="25">View</span><span data-w="24">Help</span></div>
    <div class="sg-tools">
        <span><svg><use href="#sg-block"/></svg><b data-w="46">Block All</b></span>
        <span><svg><use href="#sg-app"/></svg><b data-w="66">Applications</b></span>
        <span><svg><use href="#sg-log"/></svg><b data-w="25">Logs</b></span>
        <i class="dn gray"></i>
        <span><svg><use href="#sg-test"/></svg><b data-w="67">Security Test</b></span>
        <span><svg><use href="#sg-help"/></svg><b data-w="25">Help</b></span>
        <svg class="wall"><use href="#wall"/></svg>
    </div>
    <div class="sg-body">
        <div class="sg-graphs">
            <div class="sg-in"><b data-w="50">Incoming</b><i></i></div>
            <div class="sg-graph"><b data-w="138">Incoming Traffic History</b><div><em>10K</em><i></i></div></div>
            <div class="sg-graph"><b data-w="121">Attack History Graph</b><div><em>10</em><i></i></div></div>
        </div>
        <div class="sg-check"><span>es</span><i>&#10003;</i><span data-w="106">Hide Broadcast Traffic</span></div>
        <div class="sg-list"><div class="sg-apps" data-slot></div><div class="vscroll"><i></i></div></div>
        <div class="sg-console"><span data-w="112">Show Message Console</span></div>
    </div>
    <div class="sg-status"><span data-w="74">Security Status:</span><b data-w="34">Normal</b></div>
</template>

<!-- Ralink site survey -->
<template id="tpl-survey">
    <div class="sv-head"><div class="sv-title" data-w="63">Обзор сетей</div><div class="sv-icons"><svg><use href="#refresh"/></svg><svg><use href="#listic"/></svg></div><i class="sv-x">✕</i></div>
    <div class="sv-body">
        <div class="sv-main"><div class="sv-rows"></div><div class="vscroll"><i></i></div></div>
        <div class="sv-foot">
            <div class="sv-info">
                <div class="sv-legend"><span data-w="88">Информация о AP</span></div>
                <div class="sv-line"><span data-w="23">SSID</span><span data-w="80">BTWifi-with-FON</span><span data-w="78">Аутентификаци</span><span data-w="26">Open</span></div>
                <div class="sv-line"><span data-w="57">MAC-адрес</span><span class="mac" data-w="94">02-03-D8-63-04-C6</span><span data-w="66">Шифрование</span><span data-w="28">NONE</span></div>
            </div>
            <svg class="sv-ant"><use href="#antenna"/></svg>
        </div>
    </div>
</template>

<!-- Internet Explorer 8 -->
<template id="tpl-ie">
    <div class="title-row"><svg class="ico16"><use href="#ie"/></svg><span class="ie-title" data-w="576">Internet Explorer не может отобразить эту веб-страницу - Windows Internet Explorer</span><span class="wb"></span></div>
    <div class="ie-menu"><span data-w="29">Файл</span><span data-w="40">Правка</span><span data-w="20">Вид</span><span data-w="61">Избранное</span><span data-w="40">Сервис</span><span data-w="45">Справка</span></div>
    <div class="ie-addr">
        <svg class="nav"><use href="#arrowc"/></svg><svg class="nav flip"><use href="#arrowc"/></svg><i class="dn gray"></i>
        <div class="ie-url"><svg class="ico16"><use href="#iedoc"/></svg><span data-w="464">https://www.btopenzone.com:8443/home?CPURL=http%3A%2F%2Fi.maxthon.com%2F</span><em>⌄</em></div>
        <div class="ie-btn"><svg><use href="#go"/></svg></div><div class="ie-btn"><svg><use href="#redx"/></svg></div>
        <div class="ie-search"><svg class="ico16"><use href="#outlook"/></svg><span data-w="59">Live Search</span></div>
        <div class="ie-btn"><svg><use href="#lens"/></svg></div><div class="ie-btn sm"><i class="dn"></i></div>
    </div>
    <div class="ie-fav"><svg class="ico16"><use href="#favstar"/></svg><b data-w="61">Избранное</b><i class="sep"></i><svg class="ico16"><use href="#favstar"/></svg><svg class="ico14"><use href="#iedoc"/></svg><span data-w="132">Коллекция веб-фрагм...</span><i class="dn"></i><svg class="ico14"><use href="#iedoc"/></svg><span data-w="126">Рекомендуемые сайты</span><i class="dn"></i></div>
    <div class="ie-tabs">
        <div class="ie-tab"><svg class="ico16"><use href="#ie"/></svg><span data-w="268">Internet Explorer не может отобразить эту веб-с...</span></div><div class="ie-new"></div><i></i>
        <svg class="ico16"><use href="#home"/></svg><i class="dn gray"></i><svg class="ico16"><use href="#rss"/></svg><i class="dn gray"></i><svg class="ico16"><use href="#mail"/></svg><svg class="ico16"><use href="#print"/></svg><i class="dn gray"></i>
        <span data-w="53">Страница</span><i class="dn"></i><span data-w="75">Безопасность</span><i class="dn"></i><span data-w="40">Сервис</span><i class="dn"></i><svg class="ico16"><use href="#help"/></svg><i class="dn"></i><i class="rt"></i>
    </div>
    <div class="ie-page">
        <svg class="ie-globe"><use href="#globex"/></svg>
        <div class="ie-text">
            <h1><span data-w="454">Internet Explorer не может отобразить эту веб-страницу</span></h1>
            <p><span data-w="208">Попробуйте сделать следующее:</span></p>
            <div class="ie-diag"><span data-w="213">Диагностика проблем подключения</span></div>
            <div class="ie-more"><i><u class="dn"></u></i><span data-w="71">Подробнее</span></div>
        </div>
    </div>
    <div class="ie-status"><span data-w="38">Готово</span><i class="sep"></i><i class="sep"></i><i class="sep"></i><i class="sep"></i><i class="sep"></i><i class="sep"></i><i class="sep"></i><svg class="ico16"><use href="#globe"/></svg><span data-w="52">Интернет</span><i class="sep"></i><svg class="ico16 faded"><use href="#i-priv"/></svg><i class="dn gray"></i><i class="sep"></i><svg class="ico14"><use href="#zoomin"/></svg><span data-w="28">100%</span><i class="dn gray"></i><em class="grip"></em></div>
</template>

<!-- Explorer window with browser installers -->
<template id="tpl-downloads">
    <div class="dl-title"><span data-w="74">Downloads</span></div>
    <div class="dl-menu"><span data-w="39">Сервис</span><span data-w="45">Справка</span></div>
    <div class="dl-tools"><svg class="dl-lens"><use href="#glass"/></svg><span data-w="35">Поиск</span><svg><use href="#xpfolder"/></svg><span data-w="35">Папки</span><svg class="dl-view"><use href="#viewic"/></svg><i class="dn"></i></div>
    <div class="dl-addr"></div>
    <div class="dl-files">
        <p><svg class="ico16"><use href="#firefox"/></svg><span data-w="59">firefox2.exe</span></p>
        <p><svg class="ico16"><use href="#firefox"/></svg><span data-w="59">firefox3.exe</span></p>
        <p><svg class="ico16"><use href="#ie"/></svg><span data-w="35">ie6.exe</span></p>
        <p><svg class="ico16"><use href="#ie"/></svg><span data-w="35">ie7.exe</span></p>
        <p><svg class="ico16"><use href="#ie"/></svg><span class="hot" data-w="35">ie8.exe</span></p>
        <p><svg class="ico16"><use href="#opera"/></svg><span data-w="50">opera.exe</span></p>
        <p><svg class="ico16"><use href="#sevenz"/></svg><span data-w="181">portable-chrome-402011-dev1.exe</span></p>
        <p><svg class="ico16"><use href="#safari"/></svg><span data-w="48">safari.exe</span></p>
    </div>
</template>

<div class="frame">
<div class="page">
    <div class="board">

        <div class="col col-1">
            <!-- 15:35, SSL warning -->
            <section class="desktop" data-col2="0 1 2 3 4 5 9 10" data-col3="6" data-bin="binfull">
                <div class="win sygate" data-tpl="sygate"></div>
                <div class="win survey" data-tpl="survey"></div>
                <div class="win pf" data-tpl="pf"></div>
                <div class="win chrome">
                    <div class="strip">
                        <div class="tab"><svg class="ico16"><use href="#page"/></svg><span data-w="67">Ошибка SSL</span><i>×</i></div>
                        <div class="tab dim"><svg class="ico16"><use href="#spintop"/></svg><span data-w="137">Unlimited wi-fi from BT W</span><i>×</i></div>
                        <div class="newtab"></div>
                        <div class="cbtns"><i class="mn"></i><i class="mx"></i><i>✕</i></div>
                    </div>
                    <div class="cbar"><svg><use href="#back"/></svg><svg class="off"><use href="#fwd"/></svg><svg><use href="#reload"/></svg>
                        <div class="omni"><svg class="ico16"><use href="#lockbad"/></svg><span data-w="737"><s>https</s><em>://</em>auautv.wordpress.com<em>/2014/12/11/жить-безналично-nwo-безденежно-фреско-8д4/#comments</em></span><svg class="ostar"><use href="#star"/></svg></div>
                        <svg class="menu3"><use href="#menu3"/></svg></div>
                    <div class="client ssl">
                        <div class="ssl-card">
                            <svg class="ssl-icon"><use href="#warn"/></svg>
                            <div class="ssl-text">
                                <h2><span data-w="552">Вероятно, это не тот сайт, который вы ищете!</span></h2>
                                <div><span data-w="562">Вы попытались перейти на сайт <b>auautv.wordpress.com</b>, однако были направлены на сервер</span></div>
                                <div><span data-w="604"><b>www.btwifi.com</b>. Переадресации подобного рода происходят из-за ошибок конфигурации сервера,</span></div>
                                <div><span data-w="594">либо в случае если кто-то пытается заставить вас посетить фальсифицированную (и потенциально</span></div>
                                <div><span data-w="336">вредоносную) копию страницы <b>auautv.wordpress.com</b>.</span></div>
                                <div class="ssl-p2"><span data-w="613">Не стоит продолжать, <b>особенно</b> если ранее вы не видели этого предупреждения для данного сайта.</span></div>
                                <div class="ssl-btns"><span><b data-w="137">Продолжить все равно</b></span><span><b data-w="131">Назад к безопасности</b></span></div>
                                <div class="ssl-more"><i></i><a data-w="129">Подробные сведения</a></div>
                            </div>
                        </div>
                    </div>
                </div>
                <footer class="taskbar" data-time="15:35" data-active="8" data-tray="y-net y-grid y-r globe y-snd y-spider y-dash y-swap"
                    data-tasks="sygate:Sygate P...:51|xpfolder:GoogleC...:54|xpfolder:11d4:25|xpfolder:Новая п...:52|operam:BT | WIFI ...:56|taskmgr:Диспетч...:54|notepad:1ф2014.t...:55|notepad:Безымян...:55|chrome:Ошибка ...:56|pf:PhotoFilt...:56"></footer>
            </section>

            <!-- 15:32, page unavailable -->
            <section class="desktop" data-col2="0 1 2 3 4 5 9 10" data-col3="" data-bin="binfull">
                <div class="win sygate" data-tpl="sygate">
                    <span class="app c4"><svg><use href="#qwin"/></svg><b data-w="55">Link-Layer</b><b data-w="53">Topolog...</b></span>
                    <span class="app c5"><svg><use href="#qwin"/></svg><b data-w="45">PCAUSA</b><b data-w="61">NDIS 5.0 S...</b></span>
                    <span class="app c5"><svg><use href="#qchrome"/></svg><b data-w="38">Google</b><b data-w="35">Chro...</b></span>
                </div>
                <div class="win explorer">
                    <div class="title-row"><svg class="ico16"><use href="#xpfolder"/></svg><span class="ex-title" data-w="157">GoogleChromePortable</span><span class="wb"></span></div>
                    <div class="ex-menu"><span data-w="29">Файл</span><span data-w="40">Правка</span><span data-w="20">Вид</span><span data-w="61">Избранное</span><span data-w="40">Сервис</span></div>
                    <div class="ex-tools"><svg><use href="#grayarrow"/></svg><span data-w="33">Назад</span><i class="dn gray"></i><svg class="flip"><use href="#grayarrow"/></svg><i class="dn gray"></i><svg><use href="#upfolder"/></svg><svg><use href="#glass"/></svg><b data-w="35">Поиск</b><svg><use href="#xpfolder"/></svg></div>
                    <div class="ex-addr"><span data-w="33">Адрес:</span><div><svg class="ico16"><use href="#xpfolder"/></svg><span data-w="205">C:\Documents and Settings\Админист</span></div></div>
                    <div class="ex-body">
                        <div class="ex-side">
                            <h4><b data-w="162">Задачи для файлов и папок</b><svg><use href="#upc"/></svg></h4>
                            <p><svg><use href="#i-ren"/></svg><span data-w="108">Переименовать файл</span></p>
                            <p><svg><use href="#i-move"/></svg><span data-w="96">Переместить файл</span></p>
                            <p><svg><use href="#i-copy"/></svg><span data-w="90">Копировать файл</span></p>
                            <p><svg><use href="#i-web"/></svg><span data-w="139">Опубликовать файл в вебе</span></p>
                            <p><svg><use href="#i-mail"/></svg><span data-w="126">Отправить этот файл по</span></p>
                            <p class="cont"><span data-w="98">электронной почте</span></p>
                            <p><svg><use href="#i-del"/></svg><span data-w="73">Удалить файл</span></p>
                            <h4><b data-w="81">Другие места</b><svg><use href="#upc"/></svg></h4>
                            <p><svg><use href="#desk"/></svg><span data-w="68">Рабочий стол</span></p>
                            <p><svg><use href="#docs"/></svg><span data-w="80">Мои документы</span></p>
                            <p><svg><use href="#xpfolder"/></svg><span data-w="96">Общие документы</span></p>
                            <p><svg><use href="#pc"/></svg><span data-w="80">Мой компьютер</span></p>
                            <p><svg><use href="#i-net"/></svg><span data-w="102">Сетевое окружение</span></p>
                            <h4><b data-w="59">Подробно</b><svg class="down"><use href="#upc"/></svg></h4>
                        </div>
                        <div class="ex-files">
                            <p><svg class="ico16"><use href="#xpfolder"/></svg>App</p>
                            <p><svg class="ico16"><use href="#xpfolder"/></svg>Data</p>
                            <p><svg class="ico16"><use href="#xpfolder"/></svg>Other</p>
                            <p><svg class="ico16"><use href="#chrome"/></svg><span class="hot">GoogleChromePortable.exe</span></p>
                            <p><svg class="ico16"><use href="#sevenz"/></svg>help.html</p>
                        </div>
                    </div>
                </div>
                <div class="win chrome">
                    <div class="strip">
                        <div class="tab"><svg class="ico16"><use href="#spin"/></svg><span data-w="139">Художник | приходи в гос</span><i>×</i></div>
                        <div class="newtab"></div>
                        <div class="cbtns"><i class="mn"></i><i class="mx"></i><i>✕</i></div>
                    </div>
                    <div class="cbar"><svg><use href="#back"/></svg><svg class="off"><use href="#fwd"/></svg><svg><use href="#stopx"/></svg>
                        <div class="omni"><svg class="ico16"><use href="#lockwarn"/></svg><span data-w="205"><em>https://</em>auautv.wordpress.com</span><svg class="ostar"><use href="#star"/></svg></div>
                        <svg class="menu3"><use href="#menu3"/></svg></div>
                    <div class="client err">
                        <div class="err-card">
                            <div class="err-top">
                                <svg class="err-sad"><use href="#sad"/></svg>
                                <h2><span data-w="234">Веб-страница недоступна</span></h2>
                                <div class="err-btn"><span data-w="56">Свернуть</span></div>
                            </div>
                            <div class="err-bottom">
                                <div><span data-w="472">Веб-страница по адресу <b>https://auautv.wordpress.com/</b>, возможно, временно</span></div>
                                <div><span data-w="357">недоступна или постоянно перемещена по новому адресу.</span></div>
                                <div class="err-code"><span data-w="267">Код ошибки: ERR_CONNECTION_ABORTED</span></div>
                            </div>
                        </div>
                    </div>
                </div>
                <footer class="taskbar" data-time="15:32" data-active="8" data-tray="y-grid y-net y-r globe y-snd y-spider y-dash y-swap"
                    data-tasks="sygate:Sygate Pers...:66|xpfolder:GoogleChr...:64|xpfolder:11d4:25|xpfolder:Новая папка:67|operam:BT | WIFI - ...:63|taskmgr:Диспетчер...:66|notepad:1ф2014.txt ...:66|notepad:Безымянны...:69|chrome:Художник |...:68"></footer>
            </section>
        </div>

        <div class="col col-2">
            <!-- 15:34, blog without styles -->
            <section class="desktop" data-col2="0 1 2 3 4 9 10" data-col3="6" data-bin="binfull">
                <div class="win chrome idle">
                    <div class="strip">
                        <div class="tab"><svg class="ico16"><use href="#raven"/></svg><span data-w="139">Художник | приходи в гос</span><i>×</i></div>
                        <div class="newtab"></div>
                        <div class="cbtns"><i class="mn"></i><i class="mx"></i><i>✕</i></div>
                    </div>
                    <div class="cbar"><svg><use href="#back"/></svg><svg class="off"><use href="#fwd"/></svg><svg><use href="#reload"/></svg>
                        <div class="omni"><svg class="ico16"><use href="#lockwarn"/></svg><span data-w="205"><em>https://</em>auautv.wordpress.com</span><svg class="ostar"><use href="#star"/></svg></div>
                        <svg class="menu3"><use href="#menu3"/></svg></div>
                    <div class="client blog">
                        <div class="blog-view">
                            <div class="wpbar"><i class="wp-blog"></i><b data-w="58">Художник</b><i class="wp-news"></i><b data-w="35">Чтиво</b><span data-w="57">Отслеж...</span><i class="wp-img"><svg><use href="#img"/></svg></i><i class="wp-pen">✎</i><i class="wp-ava"></i><i class="wp-com"></i></div>
                            <ul>
                                <li><a data-w="502">ВНИМАНИЕ — САЙТ Zarubezhom.com ОПАСЕН ДЛЯ ВАШЕГО МОЗГА!</a></li>
                                <li><a data-w="325">Обсуждение и критика Руской Республики Русь</a></li>
                                <li><a data-w="185">Пытки художника Англией</a></li>
                                <li><a data-w="98">Стихи и проза</a></li>
                                <li><a data-w="58">Фильмы</a></li>
                                <li><a data-w="36">Фото</a></li>
                            </ul>
                            <div class="mark"></div>
                            <h1><span data-w="147">Художник</span></h1>
                            <h5><span data-w="236">приходи в гости говори разговоры</span></h5>
                            <div class="mark second"></div>
                            <h2><a data-w="553">ЖИТЬ безналично NWO безденежно ФРЕСКО 8д4</a></h2>
                            <div class="meta"><span data-w="244"><a>vd</a> ◆ <a>11.12.2014</a> ◆ <a>Комментарии (94)</a></span></div>
                            <p><span data-w="198">извиняте что всё так коряво..</span></p>
                            <p><span data-w="245">но посмотреть и скачать всё можно.</span></p>
                            <p class="long"><a data-w="680">https://disk.yandex.ru/client/disk/%D0%A4%D0%B8%D0%BB%D1%8C%D0%BC%D1%8B%20%D0%A8</a></p>
                            <p class="long"><a data-w="673">%20%D0%9A%D0%9E%D0%9D%D0%95%D0%A6%20%D0%92%D0%A0%D0%95%D0%9C%D0%8</a></p>
                        </div>
                        <div class="vscroll"><i></i></div>
                        <div class="hscroll"><i></i></div>
                    </div>
                </div>
                <div class="win sygate" data-tpl="sygate"></div>
                <div class="win ralink">
                    <div class="rl-cap"></div>
                    <div class="rl-head"><svg class="rl-logo"><use href="#ralink"/></svg><b data-w="58">Ralink</b>
                        <div class="rl-btns"><i>◞</i><i>⌕</i><i>≣</i><i>▯</i><i>✹</i><i>i</i></div><em>?</em><em>✕</em></div>
                    <div class="rl-body">
                        <div class="rl-side"><svg><use href="#rl-ant"/></svg><svg><use href="#rl-lock"/></svg><svg><use href="#rl-bars"/></svg></div>
                        <div class="rl-grid">
                            <span data-w="23">SSID</span><span data-w="80">BTWifi-with-FON</span>
                            <span data-w="48">Скорость</span><span data-w="49">58.5 Mbps</span><span data-w="44">IP-адрес</span><i></i>
                            <span data-w="31">Канал</span><span data-w="63">1 (2412 MHz)</span><span data-w="31">Маска</span><i></i>
                        </div>
                    </div>
                </div>
                <div class="win survey live" data-tpl="survey"></div>
                <footer class="taskbar" data-time="15:34" data-active="-1" data-tray="y-net y-grid y-r globe y-snd y-spider y-dash y-swap"
                    data-tasks="sygate:Sygate P...:51|xpfolder:GoogleC...:54|xpfolder:11d4:25|xpfolder:Новая п...:52|operam:BT | WIFI ...:56|taskmgr:Диспетч...:54|notepad:1ф2014.t...:55|notepad:Безымян...:55|chrome:Художни...:56|pf:PhotoFilt...:56"></footer>
            </section>
        </div>

        <div class="col col-3">
            <!-- 14:22, search provider dialog -->
            <section class="desktop" data-col2="0 1 9 10" data-col3="" data-bin="bin">
                <div class="win blank"></div>
                <div class="win survey" data-tpl="survey"></div>
                <div class="win sygate low" data-tpl="sygate">
                    <span class="app c1"><svg><use href="#qwin"/></svg><b data-w="55">Link-Layer</b><b data-w="53">Topolog...</b></span>
                    <span class="app c2"><svg><use href="#qie"/></svg><b data-w="41">Internet</b><b data-w="42">Explorer</b></span>
                </div>
                <div class="win downloads" data-tpl="downloads"></div>
                <div class="win iewin" data-tpl="ie"></div>
                <div class="win dlg">
                    <div class="dlg-title"><span data-w="368">Internet Explorer — поставщик поиска по умолчанию</span><i>✕</i></div>
                    <div class="dlg-body">
                        <p><span data-w="585">Программа на компьютере нарушила настройку поставщика поиска по умолчанию для Internet Explorer.</span></p>
                        <p><span data-w="551">Internet Explorer восстановил настройку исходного поставщика поиска, Live Search (search.live.com).</span></p>
                        <p><span data-w="762">Internet Explorer откроет окно параметров поиска, в котором можно изменить эту настройку или установить других поставщиков поиска.</span></p>
                        <div class="dlg-ok">OK</div>
                    </div>
                </div>
                <footer class="taskbar" data-time="14:22" data-active="9" data-tray="y-net y-user y-grid y-r globe y-snd y-spider y-swap"
                    data-tasks="taskmgr:Диспетч...:54|camtasia:Camtasia...:55|xpfolder:Downloa...:56|xpfolder:11d4:25|xpfolder:Downloa...:56|eze:EZE-15G...:52|sygate:Sygate P...:51|firefox:Page Loa...:55|opera:Error! - O...:56|ie:Internet ...:53"></footer>
            </section>

            <!-- 14:23, add-ons -->
            <section class="desktop" data-col2="0 1 2 9 10" data-col3="" data-bin="bin">
                <div class="win blank"></div>
                <div class="win survey" data-tpl="survey"></div>
                <div class="win sygate low" data-tpl="sygate">
                    <span class="app c1"><svg><use href="#qwin"/></svg><b data-w="55">Link-Layer</b><b data-w="53">Topolog...</b></span>
                    <span class="app c2"><svg><use href="#qie"/></svg><b data-w="41">Internet</b><b data-w="42">Explorer</b></span>
                </div>
                <div class="win downloads" data-tpl="downloads"></div>
                <div class="win pf" data-tpl="pf"></div>
                <div class="win iewin" data-tpl="ie"></div>
                <div class="win addons">
                    <div class="dlg-title"><span data-w="83">Надстройки</span><i>✕</i></div>
                    <div class="ad-head"><span data-w="389">Просмотр и управление надстройками Internet Explorer</span></div>
                    <div class="ad-main">
                        <div class="ad-types">
                            <h4><span data-w="89">Типы надстроек</span></h4>
                            <p><svg class="ico16"><use href="#i-gear"/></svg><span data-w="206">Панели инструментов и расширения</span></p>
                            <p class="sel"><svg class="ico16"><use href="#glass"/></svg><span data-w="88">Службы поиска</span></p>
                            <p><svg class="ico16"><use href="#i-acc"/></svg><span data-w="65">Ускорители</span></p>
                            <p><svg class="ico16"><use href="#i-priv"/></svg><span data-w="116">Фильтрация InPrivate</span></p>
                        </div>
                        <div class="ad-list">
                            <div class="ad-row ad-cols"><span data-w="24">Имя</span><span data-w="59">Состояние</span><span data-w="67">Порядок о...</span><i></i><span data-w="54">Варианты</span></div>
                            <div class="ad-row"><span><svg class="ico16"><use href="#outlook"/></svg><b data-w="59">Live Search</b></span><span data-w="84">По умолчанию</span><span>1</span><i></i><span data-w="56">Включено</span></div>
                            <div class="hscroll"><i></i></div>
                        </div>
                    </div>
                    <div class="ad-info"><h3><span data-w="563">Выберите поставщика поиска, которого требуется просмотреть или изменить.</span></h3><div class="ad-check"><i></i><span data-w="491">Блокировать предложения программ по изменению поставщика поиска по умолчанию</span></div></div>
                    <div class="ad-foot"><div><p><span data-w="200">Найти других поставщиков поиска...</span></p><p><span data-w="337">Дополнительные сведения о параметрах поставщика поиска</span></p></div><div class="ad-close"><span data-w="45">Закрыть</span></div></div>
                </div>
                <footer class="taskbar" data-time="14:23" data-active="6" data-tray="y-net y-user y-grid y-r globe y-snd y-spider y-swap"
                    data-tasks="taskmgr:Диспетчер за...:81|camtasia:Camtasia Stud...:82|xpfolder:4 Проводник:70|sygate:Sygate Person...:80|firefox:Page Load Err...:78|opera:Error! - Opera @:83|ie:Internet Explor...:85|pf:PhotoFiltre St...:78"></footer>
            </section>
        </div>
    </div>

    <div class="caption">
        <div><span data-w="2028">ФОТКИ К ЖАЛОБЕ В ВОРДПРЕСС</span></div>
        <div><span data-w="1986">КАК ИЗДЕВАЮТСЯ НАД САЙТОМ</span></div>
    </div>
</div>
</div>

<script src="app.js"></script>
</body>
</html>
```
FILE: styles.css
```
* {
    box-sizing: border-box;
}

html, body {
    margin: 0;
    width: 4096px;
    height: 2343px;
    overflow: hidden;
    background: #fff;
}

p, h1, h2, h3, h4, h5, ul {
    margin: 0;
    padding: 0;
    font-weight: normal;
}

i, em, b {
    font-style: normal;
}

.sprite {
    position: absolute;
}

.frame {
    width: 4096px;
    height: 2343px;
    overflow: hidden;
}

.page {
    width: 5650px;
    height: 3232px;
    border: 15px solid #fe0000;
    background: #fff;
    transform: scale(0.72496);
    transform-origin: 0 0;
    font-family: "Open Sans", "Noto Sans", sans-serif;
    font-size: 12px;
    line-height: 15px;
    color: #111;
    white-space: nowrap;
}

.board {
    display: flex;
    align-items: flex-start;
    height: 2201px;
    padding-left: 334px;
}

.col {
    display: flex;
    flex-direction: column;
}

.col-1 { padding-top: 180px; gap: 26px; }
.col-2 { padding-top: 171px; margin-left: 29px; }
.col-3 { padding-top: 172px; margin-left: 96px; gap: 33px; }

.caption {
    margin-left: 1847px;
    font-family: "Liberation Sans", Arial, sans-serif;
    font-size: 126px;
    line-height: 136px;
    color: #000;
}

/* ---------- desktop ---------- */

.desktop {
    position: relative;
    width: 1600px;
    height: 900px;
    overflow: hidden;
    background: #1073ad;
}

.shortcut {
    position: absolute;
    width: 90px;
    display: flex;
    flex-direction: column;
    align-items: center;
    color: #fff;
    text-shadow: 1px 1px 1px rgba(0, 0, 0, .7);
}

.shortcut svg {
    width: 31px;
    height: 31px;
    margin-bottom: 6px;
}

.taskbar {
    position: absolute;
    left: 0;
    right: 0;
    bottom: 0;
    height: 39px;
    display: flex;
    align-items: center;
    background: #267a93;
    color: #fff;
}

.start {
    display: grid;
    grid-template-columns: 64px 43px 43px 29px 26px;
    align-items: center;
    width: 220px;
    padding-left: 15px;
}

.start svg { width: 16px; height: 16px; }
.start svg.logo { width: 30px; height: 30px; }
.start b { font-size: 15px; margin-top: -22px; font-weight: normal; }

.tasks {
    display: flex;
    gap: 2px;
    width: 1090px;
    height: 38px;
    margin-top: 1px;
}

.task {
    flex: 1;
    display: flex;
    align-items: center;
    padding-left: 14px;
    background: #5193a8;
    border: 1px solid #8bbac8;
}

.task svg { width: 16px; height: 16px; margin-right: 4px; }
.task em { color: #f0a04c; }
.task .dn { margin-left: auto; margin-right: 2px; border-top-color: #fff; }
.task.active { background: linear-gradient(90deg, #74a6b6, #8db3bf 60%, #73a5b5); border-color: #e4f0f4; }

.tray {
    display: flex;
    align-items: center;
    gap: 2px;
    width: 173px;
    margin-left: 22px;
}

.tray svg { width: 16px; height: 16px; }
.tray u { width: 2px; height: 14px; border-left: 1px dotted #fff; margin-right: 10px; }
.tray u + i { width: 0; height: 0; border: 4px solid transparent; border-right: 5px solid #fff; border-left: 0; margin-right: 9px; }

.clock {
    display: grid;
    gap: 4px;
    width: 78px;
    text-align: center;
    margin-bottom: 1px;
}

/* ---------- shared window parts ---------- */

.win {
    position: absolute;
    background: #fff;
    overflow: hidden;
    display: flex;
    flex-direction: column;
}

.win > * { flex: none; }

.ico16 { width: 16px; height: 16px; flex: none; }
.ico14 { width: 14px; height: 15px; flex: none; }
.flip { transform: scaleX(-1); }
.faded { filter: grayscale(1); opacity: .7; }

.dn {
    display: block;
    width: 0;
    height: 0;
    border: 4px solid transparent;
    border-top-color: #111;
    border-bottom: 0;
}

.dn.gray { border-top-color: #888; }

.rt {
    width: 0;
    height: 0;
    border: 4px solid transparent;
    border-left-color: #222;
    border-right: 0;
}

.sep {
    width: 1px;
    height: 18px;
    background: #b8b8b8;
}

.title-row {
    display: flex;
    align-items: center;
    background: #ebebeb;
    color: #999;
    font-size: 15px;
}

.wb {
    align-self: flex-start;
    display: flex;
    margin-left: auto;
    height: 19px;
}

.wb i { width: 25px; position: relative; }
.wb i::before { content: ""; position: absolute; left: 10px; top: 10px; width: 8px; height: 2px; background: #111; }
.wb i + i::before { left: 9px; top: 5px; width: 10px; height: 8px; border: 1px solid #111; border-top-width: 2px; background: none; }
.wb b { width: 44px; background: #a9a9a9; color: #fff; font-size: 11px; line-height: 18px; text-align: center; }

.grip {
    width: 11px;
    height: 11px;
    background: radial-gradient(#999 1px, transparent 1.200px) 0 0 / 4px 4px;
    clip-path: polygon(100% 0, 100% 100%, 0 100%);
}

.vscroll {
    width: 17px;
    background: #efefef;
    display: flex;
    flex-direction: column;
    align-items: center;
    color: #555;
}

.vscroll::before, .vscroll::after { content: ""; width: 6px; height: 6px; border: 1.500px solid #555; border-width: 2px 0 0 2px; transform: rotate(45deg); margin: 8px 0 4px; flex: none; }
.vscroll::after { transform: rotate(225deg); margin: auto 0 7px; }
.vscroll i { width: 15px; background: #c9c9c9; }

.hscroll {
    height: 16px;
    background: #e9e9e9;
    display: flex;
    align-items: center;
}

.hscroll::before, .hscroll::after { content: ""; width: 5px; height: 5px; border: 2px solid #555; border-width: 0 0 2px 2px; transform: rotate(45deg); margin: 0 6px 0 7px; flex: none; }
.hscroll::after { transform: rotate(225deg); margin: 0 8px 0 auto; }
.hscroll i { height: 15px; background: #cdcdcd; }

.hot { background: #ececf0; }

/* ---------- chrome ---------- */

.chrome {
    left: 301px;
    top: 46px;
    width: 1001px;
    height: 717px;
    padding: 0 3px 3px;
    border-radius: 3px 3px 0 0;
    background: linear-gradient(#6f9bdf, #3f68c6 40px, #4468b8);
    box-shadow: inset 0 0 0 1px #2c4f9c;
}

.chrome.idle {
    background: linear-gradient(#b3caec, #98b3de 40px, #9cb6dc);
    box-shadow: inset 0 0 0 1px #6f8cb8;
}

.strip {
    display: flex;
    align-items: flex-end;
    height: 40px;
    padding-left: 1px;
}

.tab {
    position: relative;
    z-index: 1;
    display: flex;
    align-items: center;
    width: 201px;
    height: 23px;
    padding-left: 17px;
    background: linear-gradient(#fff, #f6f6f6);
    clip-path: polygon(0 100%, 11px 4px, 16px 0, 188px 0, 192px 4px, 100% 100%);
}

.tab svg { width: 14px; height: 13px; margin-right: 4px; }
.tab span { width: 139px; overflow: hidden; -webkit-mask-image: linear-gradient(90deg, #000 120px, transparent 139px); }
.tab i { margin-left: 6px; font-size: 15px; color: #444; }
.tab.dim { width: 206px; margin-left: -4px; background: #9dbcec; color: #223; }
.tab.dim svg { margin-right: 5px; }

.newtab {
    width: 32px;
    height: 16px;
    margin: 0 0 4px -3px;
    background: #a4c4f4;
    clip-path: polygon(0 0, 80% 0, 100% 100%, 22% 100%);
}

.chrome.idle .newtab { background: #8fb7f0; }

.cbtns {
    align-self: flex-start;
    display: flex;
    margin: 0 1px 0 auto;
    height: 17px;
    border: 1px solid #2a4c90;
    border-top: 0;
    border-radius: 0 0 3px 3px;
}

.cbtns i { width: 25px; display: grid; place-items: center; border-right: 1px solid #2a4c90; color: #cfe0fa; font-size: 11px; }
.cbtns i:last-child { width: 41px; border: 0; }
.cbtns .mn::before { content: ""; width: 11px; height: 4px; margin-top: 6px; border: 1px solid #1c3468; background: #dce8fa; }
.cbtns .mx::before { content: ""; width: 11px; height: 9px; border: 2px solid #cfe0fa; outline: 1px solid #1c3468; }
.idle .cbtns, .idle .cbtns i { border-color: #6080b4; }
.idle .cbtns i { color: #3c5480; }

.cbar {
    display: grid;
    grid-template-columns: 29px 29px 27px 876px 15px;
    align-items: center;
    height: 36px;
    padding-left: 10px;
    background: linear-gradient(#fafafa, #e6e6e6);
    border-bottom: 1px solid #9a9a9a;
    color: #444;
}

.cbar > svg { width: 15px; height: 15px; }
.cbar .off { color: #c4c4c4; }
.cbar .menu3 { width: 13px; height: 13px; }

.omni {
    display: flex;
    align-items: center;
    width: 865px;
    height: 26px;
    padding: 0 4px 0 6px;
    background: #fff;
    border: 1px solid #b4b4b4;
    border-radius: 2px;
    font-size: 15px;
    color: #111;
}

.omni .ico16 { width: 15px; height: 15px; margin-right: 5px; }
.omni em { color: #888; }
.omni s { position: relative; color: #a83038; text-decoration: none; }
.omni s::after { content: ""; position: absolute; left: 0; right: -3px; top: 10px; height: 2px; background: #a01c28; transform: rotate(-12deg); }
.ostar { width: 18px; height: 18px; margin-left: auto; }

.client {
    flex: 1;
    overflow: hidden;
}

.ssl {
    background: linear-gradient(#8c1122, #7d0010 48%, #640004 66%, #5c0000 75%, #580000);
    font-family: "Liberation Sans", Arial, sans-serif;
    color: #2a1430;
    padding: 40px 0 0 79px;
}

.ssl-card {
    display: flex;
    width: 836px;
    height: 286px;
    padding: 20px 0 0 20px;
    background: #fff;
    border-radius: 3px;
    box-shadow: 1px 3px 5px rgba(0, 0, 0, .8);
    font-size: 13.500px;
    line-height: 21px;
}

.ssl-icon { width: 64px; height: 54px; margin-right: 16px; }
.ssl-text { width: 636px; }
.ssl h2 { height: 46px; line-height: 34px; font-size: 24px; color: #541010; font-weight: bold; margin-left: -1px; }
.ssl-card b { color: #111; }
.ssl-p2 { margin-top: 14px; }

.ssl-btns { display: flex; gap: 10px; margin: 16px 0 16px 3px; height: 20px; }
.ssl-btns span { padding: 0 6px; border: 1px solid #999; background: linear-gradient(#f6f6f6, #dcdcdc); line-height: 18px; }
.ssl-btns b { font-weight: normal; }

.ssl-more { display: flex; align-items: center; border-top: 1px solid #bbb; padding-top: 7px; }
.ssl-more i { border: 6px solid transparent; border-left-color: #111; border-right: 0; margin: 0 2px 0 3px; }
.ssl-more a { color: #2a1480; text-decoration: underline; }

.err {
    background: #e5e5e5;
    padding: 16px 0 0 228px;
    font-family: "Liberation Sans", Arial, sans-serif;
}

.err-card {
    width: 539px;
    height: 254px;
    background: #f8f8f8;
    border: 1px solid #aaa;
    border-radius: 2px;
    box-shadow: 0 2px 3px rgba(0, 0, 0, .3);
}

.err-top {
    display: flex;
    flex-direction: column;
    align-items: center;
    height: 154px;
    padding-top: 28px;
    background: #fcfcfc;
    border-bottom: 1px solid #e6e6e6;
}

.err-sad { width: 17px; height: 21px; }
.err-top h2 { margin: 17px 0 14px; font-size: 20px; line-height: 24px; color: #666; }
.err-btn { width: 84px; height: 34px; border: 2px solid #d8ac58; background: linear-gradient(#f4f4f4, #dedede); font-size: 13px; line-height: 31px; text-align: center; }
.err-bottom { padding: 21px 20px; font-size: 13px; line-height: 16.500px; color: #444; }
.err-code { margin-top: 9px; color: #999; }

.blog {
    display: grid;
    grid-template: 1fr 17px / 1fr 18px;
    background: #fff;
    font-family: "Liberation Serif", "Times New Roman", serif;
    font-size: 16px;
    line-height: 20px;
}

.blog-view { overflow: hidden; min-width: 0; height: 620px; }
.blog-view a { color: #201470; text-decoration: underline; }

.wpbar {
    display: grid;
    grid-template-columns: 21px 73px 27px 66px 76px 574px 51px 39px 20px;
    align-items: center;
    height: 33px;
    padding-left: 11px;
    background: #222;
    font-family: "Noto Sans", sans-serif;
    font-size: 13px;
    color: #b0b0b0;
}

.wpbar b { font-weight: 500; color: #fff; }
.wp-blog { width: 18px; height: 17px; background: #ddd; border-radius: 3px; }
.wp-news { width: 17px; height: 14px; border: 2px solid #fff; background: linear-gradient(#444 3px, #fff 3px 5px, #444 5px); }
.wp-img { width: 24px; height: 24px; border: 1px solid #ccc; display: grid; place-items: center; }
.wp-img svg { width: 14px; height: 16px; }
.wp-pen { width: 43px; height: 28px; border-radius: 4px; background: #999; color: #111; text-align: center; line-height: 28px; font-size: 17px; }
.wp-ava { width: 22px; height: 22px; border-radius: 11px; background: #8fb89c; border: 3px solid #e4e8ea; margin-left: 5px; }
.wp-com { width: 11px; height: 8px; border-radius: 2px; background: #eee; margin-left: 2px; }

.blog ul { list-style: none; padding: 15px 0 0 48px; }
.blog li::before { content: "•"; display: inline-block; width: 0; margin-right: 0; text-indent: -17px; }
.mark { width: 5px; height: 28px; margin: 20px 0 0 8px; background: #7f9cb8; }
.mark.second { margin: -5px 0 0 8px; }
.blog h1 { padding: 38px 0 0 28px; height: 128px; font-size: 32px; line-height: 34px; font-weight: bold; color: #d4d4d4; }
.blog h5 { padding-left: 8px; height: 29px; line-height: 36px; font-size: 15px; font-weight: bold; color: #d8d8d8; }
.blog h2 { padding-left: 8px; margin-top: 17px; font-size: 24px; line-height: 28px; font-weight: bold; }
.blog .meta { margin: 19px 0 0 8px; }
.blog p { margin: 16px 0 0 8px; }
.blog .long + .long { margin-top: 0; }
.blog > .vscroll i { height: 48px; }
.blog > .hscroll { grid-column: 1 / 3; }
.blog > .hscroll i { width: 295px; }

/* ---------- photofiltre ---------- */

.pf {
    left: 697px;
    top: 127px;
    width: 800px;
    height: 598px;
    padding: 0 4px 3px;
    background: #ececec;
    border: 1px solid #d8d8d8;
}

.pf .title-row { height: 25px; }

.pf-menu {
    display: grid;
    grid-template-columns: 54px 43px 60px;
    height: 21px;
    padding: 3px 0 0 431px;
    border: 1px solid #ccc;
    border-bottom-color: #bbb;
    background: #f1f1f1;
}

.pf-bar {
    display: flex;
    align-items: center;
    height: 31px;
    padding-left: 436px;
    overflow: hidden;
    background: linear-gradient(#f6f6f6, #e4e4e4);
    border-bottom: 1px solid #c4c4c4;
}

.pf-bar svg { width: 16px; height: 17px; margin: 0 7px; flex: none; }
.pf-bar .gap { width: 8px; flex: none; }
.pf-bar2 { padding-left: 416px; }
.dots { width: 3px; height: 24px; margin: 0 6px 0 5px; border-left: 2px dotted #888; }
.combo { display: flex; justify-content: space-between; align-items: center; width: 73px; height: 21px; padding: 0 2px 0 5px; border: 1px solid #aaa; color: #999; flex: none; }
.combo b { font-weight: normal; font-size: 11px; font-family: "DejaVu Sans", sans-serif; }
.combo i { width: 15px; height: 16px; border: 1px solid #aaa; display: grid; place-items: center; }

.pf-body { display: flex; flex: 1 !important; }
.pf-left { width: 30px; display: flex; flex-direction: column; justify-content: flex-end; gap: 6px; padding-left: 6px; overflow: hidden; }
.pf-left svg { width: 16px; height: 16px; flex: none; }
.pf-canvas { flex: 1; background: #7f7f7f; overflow: hidden; }
.pf-canvas svg { width: 100%; height: 100%; opacity: .25; }
.pf-panel { width: 95px; padding: 6px 8px 0 7px; background: #f2f2f2; }

.pf-colors { display: flex; justify-content: space-between; height: 60px; }
.swatches { position: relative; width: 56px; height: 55px; }
.swatches > * { position: absolute; }
.sw-bg { left: 17px; top: 17px; width: 39px; height: 38px; background: #fff; border: 1px solid #bbb; }
.sw-fg { left: 0; top: 0; width: 39px; height: 37px; background: #c0b890; border: 1px solid #888; }
.sw-mini { left: 3px; bottom: 5px; width: 8px; height: 8px; background: #000; box-shadow: 3px 2px 0 -1px #fff, 3px 2px 0 #000; }
.sw-swap { right: 1px; top: 0; font-size: 14px; color: #000; }
.rainbow { width: 18px; height: 54px; background: linear-gradient(red, yellow 25%, lime 38%, cyan 52%, blue 68%, magenta 86%, #e0004c); }
.palette { display: grid; grid-template-columns: repeat(8, 10px); grid-auto-rows: 9.700px; background: #ccc; height: 49px; }
.palette i { border: solid #b8b8b8; border-width: 0 1px 1px 0; }
.pf-scroll { display: flex; gap: 5px; margin-top: 4px; }
.pf-scroll i { width: 38px; height: 14px; border: 1px solid #999; border-bottom-color: #ddd; font-size: 9px; line-height: 12px; text-align: center; color: #456; }
.pf-tools, .pf-shapes { display: grid; grid-template-columns: repeat(3, 27.300px); grid-auto-rows: 26px; justify-items: center; align-items: center; margin: 7px 0 0 0; }
.pf-tools svg, .pf-shapes svg { width: 17px; height: 17px; }
.pf-tools svg:first-child { width: 25px; height: 24px; padding: 3px; background: #fff; border: 1px solid #333; }
.pf-shapes { margin-top: 3px; padding-top: 5px; border-top: 1px solid #aaa; }
.pf-edge { display: flex; align-items: center; gap: 4px; margin: 11px 0 0 2px; color: #aaa; font-family: "Liberation Sans", sans-serif; }
.pf-edge i { width: 13px; height: 13px; border: 1px solid #aaa; background: #e4e4e4; }

.pf-status { display: grid; grid-template-columns: 391px 110px 120px 164px 12px; align-items: center; height: 19px; padding-left: 1px; background: #fff; border-top: 1px solid #ccc; font-size: 11.500px; }
.pf-status > i { width: 1px; height: 12px; background: #aaa; margin-left: 16px; }

/* ---------- sygate ---------- */

.sygate {
    left: 985px;
    top: 215px;
    width: 485px;
    height: 548px;
    padding: 0 4px 4px 3px;
    background: #e9eef1;
    border: 1px solid #dde6ec;
}

.sygate.low { left: 558px; top: 208px; }
.sygate .title-row { height: 25px; padding-left: 2px; background: #ececec; }
.sg-title { margin-left: 81px; padding-top: 2px; }

.sg-menu {
    display: grid;
    grid-template-columns: 32px 56px 43px 39px 30px;
    height: 21px;
    padding: 1px 0 0 7px;
    background: #f0f0f0;
    border-bottom: 1px solid #888;
    color: #999;
    font-family: "Liberation Sans", sans-serif;
    font-size: 11px;
}

.sg-tools {
    display: grid;
    grid-template-columns: 81px 88px 82px 18px 82px 68px 48px;
    justify-items: center;
    align-items: center;
    height: 50px;
    padding-left: 4px;
    background: #fff;
    border-bottom: 2px solid #777;
}

.sg-tools span { display: grid; justify-items: center; padding-top: 3px; }
.sg-tools svg { width: 20px; height: 18px; }
.sg-tools b { font-weight: normal; margin-top: 2px; }
.sg-tools .wall { width: 46px; height: 38px; margin-top: -5px; }

.sg-body { height: 427px; padding: 4px 15px 0 20px; background: #fff; border-left: 1px solid #777; }
.sg-graphs { display: flex; gap: 3px; width: 442px; height: 195px; padding: 2px 3px 3px 3px; border: 1px solid #555; color: #35d840; font: bold 10px/12px "Liberation Sans", sans-serif; }
.sg-in, .sg-graph { background: #000; height: 188px; text-align: center; }
.sg-in { width: 56px; margin-right: -2px; padding-top: 1px; }
.sg-in i { display: block; width: 32px; height: 130px; margin: 3px auto; background: repeating-linear-gradient(#0c5418 0 2px, #000 2px 4px); }
.sg-graph { width: 187px; padding-top: 5px; }
.sg-graph b { margin-left: 34px; }
.sg-graph div { display: flex; margin-top: 3px; }
.sg-graph em { width: 35px; padding-right: 1px; text-align: right; line-height: 8px; }
.sg-graph i { flex: 1; height: 160px; border-left: 1px solid #35d840; border-bottom: 1px solid #c02020; border-top: 1px solid #17752a; background: repeating-linear-gradient(90deg, transparent 0 11px, #12501c 11px 12px), repeating-linear-gradient(transparent 0 15px, #12501c 15px 16px); }
.sg-check { display: flex; justify-content: flex-end; align-items: center; gap: 4px; width: 442px; height: 21px; padding-right: 9px; font: 12px "Liberation Sans", sans-serif; }
.sg-check i { width: 12px; height: 12px; margin-left: 5px; border: 1px solid #555; line-height: 11px; font-weight: bold; }
.sg-list { display: flex; justify-content: space-between; width: 442px; height: 179px; border: 1px solid #555; }
.sg-list .vscroll i { height: 132px; }
.sg-apps { display: grid; grid-template-columns: repeat(5, 75px); grid-auto-rows: 75px; align-content: start; padding-top: 3px; }
.sygate.low .sg-apps { padding-top: 88px; }
.app { display: grid; justify-items: center; align-content: start; }
.app svg { width: 32px; height: 30px; margin-bottom: 5px; }
.app b { font-weight: normal; }
.app.c2 { grid-column: 2; }
.app.c4 { grid-column: 4; }
.app.c5 { grid-column: 5; }
.sg-console { width: 130px; height: 20px; margin: 4px 0 0 154px; border: 1px solid #888; background: #eee; font: 12px/18px "Liberation Sans", sans-serif; text-align: center; }
.sg-status { display: flex; align-items: center; height: 19px; margin-top: 1px; padding-left: 5px; background: #f0f0f0; border-top: 1px solid #bbb; font: 12px "Liberation Sans", sans-serif; }
.sg-status b { flex: 1; margin-left: 7px; padding-left: 1px; border-left: 1px solid #777; border-top: 1px solid #ccc; font-weight: normal; }

/* ---------- ralink ---------- */

.survey {
    left: 1001px;
    top: 371px;
    width: 398px;
    height: 377px;
    padding: 0 8px 6px 9px;
    border-radius: 7px;
    background: linear-gradient(#dde7f6, #b0c4e6 40px, #c8d6ea 90px, #dfe6f0 95%, #8c98a8);
    border: 1px solid #8894a8;
    font: 11px/13px "DejaVu Sans", sans-serif;
}

.sv-head { display: flex; flex-wrap: wrap; align-items: center; height: 48px; position: relative; }
.sv-title { width: 100%; padding-right: 12px; text-align: center; line-height: 20px; }
.sv-icons { display: flex; gap: 11px; margin: -8px 0 0 2px; }
.sv-icons svg { width: 16px; height: 18px; }
.sv-x { margin: -28px 5px 0 auto; font-size: 12px; font-weight: bold; color: #24406c; }
.sv-body { height: 321px; padding: 7px 4px 0; background: #e9f2f9; border-top: 2px solid #667894; border-radius: 5px 5px 3px 3px; }
.sv-main { display: flex; justify-content: space-between; height: 257px; }
.sv-rows p { display: grid; grid-template-columns: 16px 7px 112px 34px 45px 20px 20px 20px 18px 36px; align-items: center; height: 17px; }
.sv-rows svg { width: 13px; height: 15px; }
.sv-rows .bt { width: 13px; height: 15px; border-radius: 7px; background: #101a5c; color: #fff; font: bold 12px/13px "Liberation Sans", sans-serif; text-align: center; }
.sv-rows .bt.g { background: #35c845; color: #0a3a10; }
.sv-rows .bt.n { background: #7c1078; }
.live .sv-rows p.on { background: linear-gradient(90deg, transparent 16px, #77aed4 16px); }
.live .sv-rows p.on .bt, .live .sv-rows p.on svg:not(:first-child) { opacity: .55; }
.sv-main .vscroll { width: 16px; background: #eef1f4; }
.sv-main .vscroll i { height: 53px; margin-top: 18px; }
.sv-foot { display: flex; align-items: center; justify-content: space-between; }
.sv-info { width: 325px; height: 49px; margin-top: 5px; border: 1px solid #889; margin-left: -1px; }
.sv-legend { height: 14px; margin-top: -7px; padding-left: 8px; }
.sv-legend span { background: #e9f2f9; }
.sv-line { display: grid; grid-template-columns: 77px 101px 80px 50px; height: 18px; padding: 4px 0 0 1px; }
.sv-ant { width: 38px; height: 38px; margin-right: 8px; }
.live .mac { width: 94px; height: 9px; margin-top: 2px; background: linear-gradient(90deg, transparent, #b4bec8); color: transparent; overflow: hidden; }

.ralink {
    left: 601px;
    top: 371px;
    width: 399px;
    height: 161px;
    background: none;
    font: 11px/13px "DejaVu Sans", sans-serif;
}

.rl-cap {
    height: 20px;
    background: linear-gradient(90deg, #dfe8f6 112px, #6a82b8 112px);
    clip-path: polygon(0 100%, 0 6px, 6px 0, 110px 0, 118px 5px, 398px 5px, 398px 100%);
}

.rl-cap::after { content: ""; display: block; height: 20px; background: linear-gradient(#e8eef8, #d4e0f2); clip-path: polygon(0 0, 110px 0, 134px 100%, 0 100%); }

.rl-head {
    display: grid;
    grid-template-columns: 38px 129px 163px 20px 20px;
    align-items: center;
    height: 36px;
    padding-left: 13px;
    background: linear-gradient(#d4e0f2, #b4c4e2);
    color: #24406c;
}

.rl-head .rl-logo { width: 34px; height: 30px; margin-top: -12px; }
.rl-head b { font: bold 20px "Liberation Sans", sans-serif; color: #1d4a8c; margin-top: -2px; }
.rl-btns { display: flex; gap: 8.500px; margin-left: 1px; }
.rl-btns i { width: 18px; height: 20px; border-radius: 10px; border: 1px solid #5c74a4; box-shadow: inset 0 0 0 2px #eef2fa; background: #8fa4cc; line-height: 18px; text-align: center; font-weight: bold; color: #fff; }
.rl-head em { font-weight: bold; text-align: center; }
.rl-body { display: flex; gap: 4px; height: 105px; padding: 4px 6px 8px 7px; background: linear-gradient(#1f2138, #2a2c44) 5px 1px / 388px 98px no-repeat #c4cede; border-radius: 0 0 5px 5px; border-bottom: 2px solid #778; }
.rl-side { display: grid; width: 40px; justify-items: center; align-items: center; border: 1px solid #667; background: #20223a; height: 92px; }
.rl-side svg { width: 28px; height: 24px; }
.rl-grid { display: grid; grid-template-columns: 64px 110px 60px 80px; grid-auto-rows: 24px; align-items: center; padding: 7px 0 0 17px; color: #b4b83c; }
.rl-grid span:nth-child(2) { grid-column: 2 / 5; }
.rl-grid span:nth-child(1)::before, .rl-grid span:nth-child(3)::before, .rl-grid span:nth-child(5)::before, .rl-grid span:nth-child(7)::before, .rl-grid span:nth-child(9)::before { content: ""; display: inline-block; width: 6px; height: 6px; margin: 0 3px 1px -9px; background: #c8622c; clip-path: polygon(0 0, 100% 50%, 0 100%, 40% 50%); }
.rl-grid i { width: 80px; height: 8px; background: linear-gradient(90deg, transparent, #74763c); }

/* ---------- internet explorer ---------- */

.iewin {
    left: 129px;
    top: 1px;
    width: 999px;
    height: 599px;
    padding: 0 3px 3px;
    border: 1px solid #d4d8dc;
    background: #ebebeb;
}

.iewin .title-row { height: 26px; padding-left: 3px; border-bottom: 1px solid #c4c4c4; }
.ie-title { margin-left: 141px; }
.iewin > div + div { background: #fff; }

.ie-menu { display: grid; grid-template-columns: 45px 56px 36px 78px 56px 60px; align-items: center; height: 26px; padding-left: 10px; border-bottom: 1px solid #999; color: #999; }
.ie-addr { display: grid; grid-template-columns: 28px 29px 24px 552.500px 26.500px 29px 259.500px 21px 14px; align-items: center; height: 36px; padding-left: 3px; }
.ie-addr .nav { width: 26px; height: 26px; }
.ie-url { display: flex; align-items: center; width: 547px; height: 21px; padding: 0 4px 0 3px; border: 1px solid #ccc; color: #111; }
.ie-url span, .ie-search span { margin-left: 5px; }
.ie-url em { margin: -8px 0 0 auto; font-size: 15px; }
.ie-btn { display: grid; place-items: center; width: 21px; height: 21px; border: 1px solid #aab8d0; border-radius: 2px; background: #f4f8fe; }
.ie-btn svg { width: 14px; height: 15px; }
.ie-btn.sm { width: 14px; }
.ie-search { display: flex; align-items: center; width: 254px; height: 21px; padding-left: 2px; border: 1px solid #ccc; color: #999; }
.ie-fav { display: grid; grid-template-columns: 21px 73px 8px 25px 19px 136px 19px 21px 128px 12px; align-items: center; height: 24px; padding-left: 6px; color: #999; }
.ie-fav b { font-weight: normal; color: #222; }
.ie-tabs { display: grid; grid-template-columns: 299px 29px 197px 25px 23px 28px 17px 29px 28px 20px 54px 23px 77px 22px 42px 18px 17px 26px 10px; align-items: center; height: 34px; padding: 2px 0 0 6px; border-bottom: 2px solid #5c6470; }
.ie-tab { display: flex; align-items: center; gap: 3px; height: 27px; margin-top: 5px; padding-left: 5px; border: 1px solid #7c98c4; border-bottom: 0; background: linear-gradient(#fff, #d8e4f6); }
.ie-new { height: 24px; margin-top: 2px; border: 1px solid #8ca4cc; background: #e4ecf8; }
.ie-page { display: flex; height: 426px; border-left: 2px solid #666; background: linear-gradient(#fff, #f8f8fb 60%, #eff1f5) !important; }
.ie-globe { width: 46px; height: 47px; margin: 24px 0 0 21px; }
.ie-text { padding: 29px 0 0 13px; color: #666; }
.ie-text h1 { width: 671px; height: 43px; border-bottom: 1px solid #b0b0b0; font-size: 18px; line-height: 29px; color: #4c6290; }
.ie-text p { margin-top: 22px; line-height: 18px; font-size: 13px; }
.ie-diag { width: 233px; height: 22px; margin: 17px 0 0 8px; border: 1px solid #4c84bc; background: linear-gradient(#f4f4f4, #dedede); color: #111; font: 13px/20px "Liberation Sans", sans-serif; text-align: center; }
.ie-more { display: flex; align-items: center; gap: 10px; margin: 21px 0 0 3px; color: #1c6c88; font-size: 13px; }
.ie-more i { display: grid; place-items: center; width: 15px; height: 15px; border: 1px solid #7ca0cc; border-radius: 8px; background: #d8e6f6; }
.ie-status { display: grid; grid-template-columns: 463px 24px 24px 24px 24px 24px 24px 6px 20px 203px 11px 26px 13px 13px 15px 46px 20px 11px; align-items: center; height: 23px; padding-left: 2px; border-top: 1px solid #aaa; }

/* ---------- explorer windows ---------- */

.blank { left: 743px; top: 300px; width: 800px; height: 517px; border: 3px solid #e8eff4; }

.downloads { left: 915px; top: 56px; width: 900px; height: 597px; border: 3px solid #ececec; border-top: 0; }
.dl-title { height: 26px; padding: 7px 0 0 314px; background: #ebebeb; border-bottom: 1px solid #ccc; color: #999; font-size: 15px; }
.dl-menu { display: grid; grid-template-columns: 56px 60px; height: 24px; padding: 4px 0 0 226px; color: #999; }
.dl-tools { display: flex; align-items: center; height: 43px; padding: 2px 0 0 200px; border-bottom: 1px solid #ccc; }
.dl-tools svg { width: 22px; height: 20px; margin: 0 6px 0 12px; }
.dl-tools .dl-lens { margin: 0; }
.dl-tools .dl-view { margin: 0 5px 0 18px; }
.dl-addr { height: 23px; border-bottom: 1px solid #ccc; }
.dl-files { padding: 1px 0 0 242px; }
.dl-files p { display: flex; align-items: center; gap: 3px; height: 17px; }

.explorer { left: 22px; top: 30px; width: 800px; height: 597px; padding: 0 3px 3px; background: #e6eef2; border: 1px solid #dce4ea; color: #222; }
.explorer > div { background: #fff; }
.explorer .title-row { height: 24px; padding-left: 2px; background: #ebebeb; }
.ex-title { margin-left: 254px; padding-top: 4px; }
.ex-menu { display: grid; grid-template-columns: 44px 56px 36px 77px 40px; align-items: center; height: 23px; padding-left: 11px; color: #999; }
.ex-tools { display: grid; grid-template-columns: 28px 45px 20px 29px 25px 35px 26px 46px 20px; align-items: center; height: 45px; padding-left: 10px; color: #999; }
.ex-tools svg { width: 22px; height: 23px; }
.ex-tools b { font-weight: normal; color: #222; }
.ex-addr { display: flex; gap: 5px; align-items: center; height: 24px; padding-left: 6px; }
.ex-addr div { display: flex; flex: 1; align-items: center; gap: 5px; height: 21px; padding-left: 3px; border: 1px solid #ccc; }
.ex-body { display: flex; flex: 1 !important; }
.ex-side { width: 239px; padding: 5px 0 0 13px; font: 11px/13px "DejaVu Sans", sans-serif; color: #555; }
.ex-side h4 { display: flex; align-items: center; justify-content: space-between; width: 196px; height: 30px; margin: 0 0 4px; color: #111; }
.ex-side h4 svg { width: 19px; height: 20px; }
.ex-side p + h4 { margin-top: 22px; }
.ex-side .down { transform: scaleY(-1); }
.ex-side p { display: flex; align-items: center; gap: 6px; height: 20px; }
.ex-side p svg { width: 15px; height: 16px; }
.ex-side .cont { height: 10px; padding-left: 21px; }
.ex-files p { display: flex; align-items: center; gap: 3px; height: 17px; }

/* ---------- dialogs ---------- */

.dlg { left: 408px; top: 372px; width: 792px; height: 173px; padding: 0 3px 3px; background: #5ba3b9; border: 1px solid #3a8298; }
.dlg-title { display: flex; align-items: center; justify-content: center; height: 24px; background: #5ba3b9; font-size: 15px; color: #1c3038; position: relative; }
.dlg-title i { position: absolute; right: 0; top: 0; width: 44px; height: 18px; background: #c75050; color: #fff; font-size: 11px; line-height: 16px; text-align: center; }
.dlg-body { flex: 1 !important; padding: 13px 0 0 17px; background: #efefef; }
.dlg-body p { height: 30px; }
.dlg-ok { width: 87px; height: 25px; margin: 5px 0 0 331px; border: 1px solid #111; border-right-width: 2px; border-bottom-width: 2px; background: #efefef; text-align: center; line-height: 22px; }

.addons { left: 229px; top: 90px; width: 801px; height: 566px; padding: 0 3px 3px; background: #5ba3b9; border: 1px solid #3a8298; }
.addons .dlg-title span { margin-right: 36px; }
.ad-head { height: 67px; padding: 16px 0 0 12px; background: #fff; border-bottom: 1px solid #ccc; font-size: 14px; color: #22209c; }
.ad-main { display: flex; height: 247px; background: #fff; }
.ad-types { width: 286px; padding: 6px 7px 0 6px; border-right: 1px solid #ccc; color: #22209c; }
.ad-types h4 { height: 22px; padding-left: 4px; color: #999; }
.ad-types p { display: flex; align-items: center; gap: 3px; height: 22px; margin-bottom: 2px; padding-left: 2px; border: 1px solid transparent; }
.ad-types .sel { border-color: #999; background: #eee; }
.ad-list { flex: 1; display: flex; flex-direction: column; overflow: hidden; color: #222; }
.ad-row { display: grid; grid-template-columns: 205px 122px 92px 25px 60px; align-items: center; height: 19px; padding-left: 4px; }
.ad-row span svg { margin-right: 2px; vertical-align: -3px; }
.ad-row b { font-weight: normal; }
.ad-cols { height: 20px; padding-left: 9px; grid-template-columns: 201px 124px 81px 35px 60px; background: linear-gradient(90deg, #ccc 1px, transparent 1px) 199px 0 / 1px 100% no-repeat, linear-gradient(90deg, #ccc 1px, transparent 1px) 319px 0 / 1px 100% no-repeat, linear-gradient(90deg, #ccc 1px, transparent 1px) 439px 0 / 1px 100% no-repeat; }
.ad-row:not(.ad-cols) { grid-template-columns: 202px 122px 95px 25px 60px; }
.ad-cols i { border: 5px solid transparent; border-bottom-color: #bbb; border-top: 0; width: 10px; margin-left: 2px; }
.ad-list .hscroll { margin-top: auto; }
.ad-list .hscroll i { width: 424px; }
.ad-info { display: flex; flex-direction: column; justify-content: space-between; height: 185px; padding: 6px 0 9px 7px; background: linear-gradient(90deg, #fafdff, #dff0fa 50%, #d2e9f6); border-top: 1px solid #d8d8d8; }
.ad-info h3 { font-size: 15px; line-height: 22px; color: #22209c; }
.ad-check { display: flex; gap: 11px; margin-left: 1px; color: #222; }
.ad-check i { width: 13px; height: 13px; border: 1px solid #444; background: #fff; }
.ad-foot { display: flex; justify-content: space-between; flex: 1 !important; padding: 4px 13px 0 9px; background: #f0f0f0; color: #22209c; }
.ad-close { width: 88px; height: 25px; margin-top: 3px; border: 1px solid #aaa; background: #efefef; color: #111; text-align: center; line-height: 23px; }
```
FILE: app.js
```
const page = document.querySelector(".page");
const svg = (id, cls = "") => `<svg class="${cls}"><use href="#${id}"/></svg>`;

// desktop shortcuts: icon, label lines with their widths
const first = [
    ["docs", ["Мои", 25], ["документы", 61]],
    ["pc", ["Мой", 25], ["компьютер", 62]],
    ["folder", ["PhotoFiltre", 58], ["Studio X 10....", 71]],
    ["folder", ["winrar401++", 66]],
    ["folder", ["PhotoFiltre", 58], ["Studio X", 43]],
    ["rar", ["Driver.Rob...", 64]],
    ["bin", ["Корзина", 46]],
    ["txt", ["1ф2014.txt", 54]],
    ["folder", ["u01", 17]],
    ["mspe", ["Microsoft", 51], ["Photo E...", 50]],
    ["studio", ["PhotoFiltre....", 70]]
];
const second = {
    0: ["img", ["1405718276...", 68]],
    1: ["txt", ["clamav_rep...", 68]],
    2: ["img", ["oi.jpg", 30]],
    3: ["txt", ["pp.txt", 30]],
    4: ["img", ["k.jpg", 26]],
    5: ["img", ["kik.jpg", 34]],
    9: ["folder", ["Dr. Web", 41]],
    10: ["ptopaz", ["P._Topaz_...", 61]]
};
const third = { 6: ["folder", ["install_flas...", 63]] };

function shortcut([icon, ...lines], x, row) {
    const text = lines.map(([t, w]) => `<span data-w="${w}">${t}</span>`).join("");
    return `<div class="shortcut" style="left:${x - 45}px;top:${2 + row * 78.1}px">${svg(icon)}${text}</div>`;
}

document.querySelectorAll(".desktop").forEach(desk => {
    let html = first.map((s, i) => shortcut(i === 6 ? [desk.dataset.bin, s[1]] : s, 38.5, i)).join("");
    desk.dataset.col2.split(" ").forEach(r => html += shortcut(second[r], 114, r));
    if (desk.dataset.col3) html += shortcut(third[6], 190, 6);
    desk.insertAdjacentHTML("afterbegin", html);
});

// taskbars
document.querySelectorAll(".taskbar").forEach(bar => {
    const tasks = bar.dataset.tasks.replace(/BT \| WIFI/g, "BT ¦ WIFI").replace("Художник |", "Художник ¦").split("|");
    const active = Number(bar.dataset.active);
    bar.innerHTML =
        `<div class="start">${svg("winlogo", "logo")}${svg("maxthon")}${svg("desk")}${svg("ie")}<b>»</b></div>` +
        `<div class="tasks">` + tasks.map((t, i) => {
            const [icon, label, w] = t.replace("¦", "|").split(":");
            const group = label.startsWith("4 ");
            return `<div class="task${i === active ? " active" : ""}">${svg(icon)}<span data-w="${w}">${group ? label.replace("4", "<em>4</em>") : label}</span>${group ? '<i class="dn"></i>' : ""}</div>`;
        }).join("") + `</div>` +
        `<div class="tray"><u></u><i></i>${bar.dataset.tray.split(" ").map(i => svg(i)).join("")}</div>` +
        `<div class="clock"><span data-w="27">${bar.dataset.time}</span><span data-w="45">пятница</span></div>`;
});

// windows that appear on several desktops
document.querySelectorAll("[data-tpl]").forEach(host => {
    const own = [...host.children];
    host.replaceChildren(document.getElementById("tpl-" + host.dataset.tpl).content.cloneNode(true));
    const slot = host.querySelector("[data-slot]");
    if (slot) slot.append(...own);
});

document.querySelectorAll(".wb").forEach(el => el.innerHTML = "<i></i><i></i><b>✕</b>");

document.querySelectorAll("[data-icons]").forEach(el => {
    el.insertAdjacentHTML("afterbegin", el.dataset.icons.split(" ").map(i => i === "|" ? '<i class="gap"></i>' : svg(i)).join(""));
});
document.querySelectorAll(".pf-bar1").forEach(el => el.insertAdjacentHTML("beforeend", svg("zoomin") + svg("zoomin")));

const colors = ("000 930 330 030 036 000080 333399 333 800000 f60 808000 008000 008080 00f 669 808080 " +
    "f00 f90 9c0 396 3cc 36f 800080 969696 f0f fc0 ff0 0f0 0ff 0cf 936 c0c0c0 f9c fc9 ff9 cfc cff 9cf c9f fff").split(" ");
document.querySelectorAll(".palette").forEach(el => {
    el.innerHTML = colors.map(c => `<i style="background:#${c}"></i>`).join("");
});

// networks in range: name, width, channel, mark, signal
const nets = [
    ["BTHub4-FWXM", 72, 6, "wps", 57], ["BTHub4-K7PT", 65, 6, "wps", 52], ["BTHub4-W32P", 69, 6, "wps", 47],
    ["BTHub5-FQHS", 68, 1, "wps", 47], ["BTWiFi", 33, 7, "", 26], ["BTWifi-with-FON", 80, 1, "", 68],
    ["BTWifi-with-FON", 80, 6, "", 52], ["BTWifi-with-FON", 80, 6, "", 52], ["BTWiFi-with-FON", 81, 6, "", 42],
    ["BTWifi-with-FON", 80, 11, "", 78], ["BTWifi-with-FON", 80, 1, "", 37], ["BTWifi-with-FON", 80, 6, "", 47],
    ["BTWifi-with-FON", 80, 1, "", 47], ["BTWifi-X", 40, 1, "key", 68], ["BTWifi-X", 40, 1, "key", 47]
];
document.querySelectorAll(".survey").forEach(win => {
    const live = win.classList.contains("live");
    const rows = nets.map(n => [...n]);
    if (!live) {
        rows[13][2] = rows[14][2] = 6;
        rows[13][4] = 50;
        rows[14][4] = 34;
    }
    win.querySelector(".sv-rows").innerHTML = rows.map(([name, w, ch, mark, pct], i) =>
        `<p class="${i === 5 ? "on" : ""}">${i === 5 && live ? svg("tick") : "<i></i>"}<i></i><span data-w="${w}">${name}</span>${svg("hand")}<span>${ch}</span>` +
        `<b class="bt">b</b><b class="bt g">g</b><b class="bt n">n</b>${mark ? svg(mark) : "<i></i>"}<span data-w="23">${pct}%</span></p>`).join("");
});

// track every label out to its own width
const k = page.getBoundingClientRect().width / page.offsetWidth;
document.querySelectorAll("[data-w]").forEach(el => {
    const range = document.createRange();
    range.selectNodeContents(el);
    const natural = range.getBoundingClientRect().width / k;
    const count = el.textContent.length;
    if (natural) el.style.letterSpacing = ((el.dataset.w - natural) / count).toFixed(3) + "px";
});
```
